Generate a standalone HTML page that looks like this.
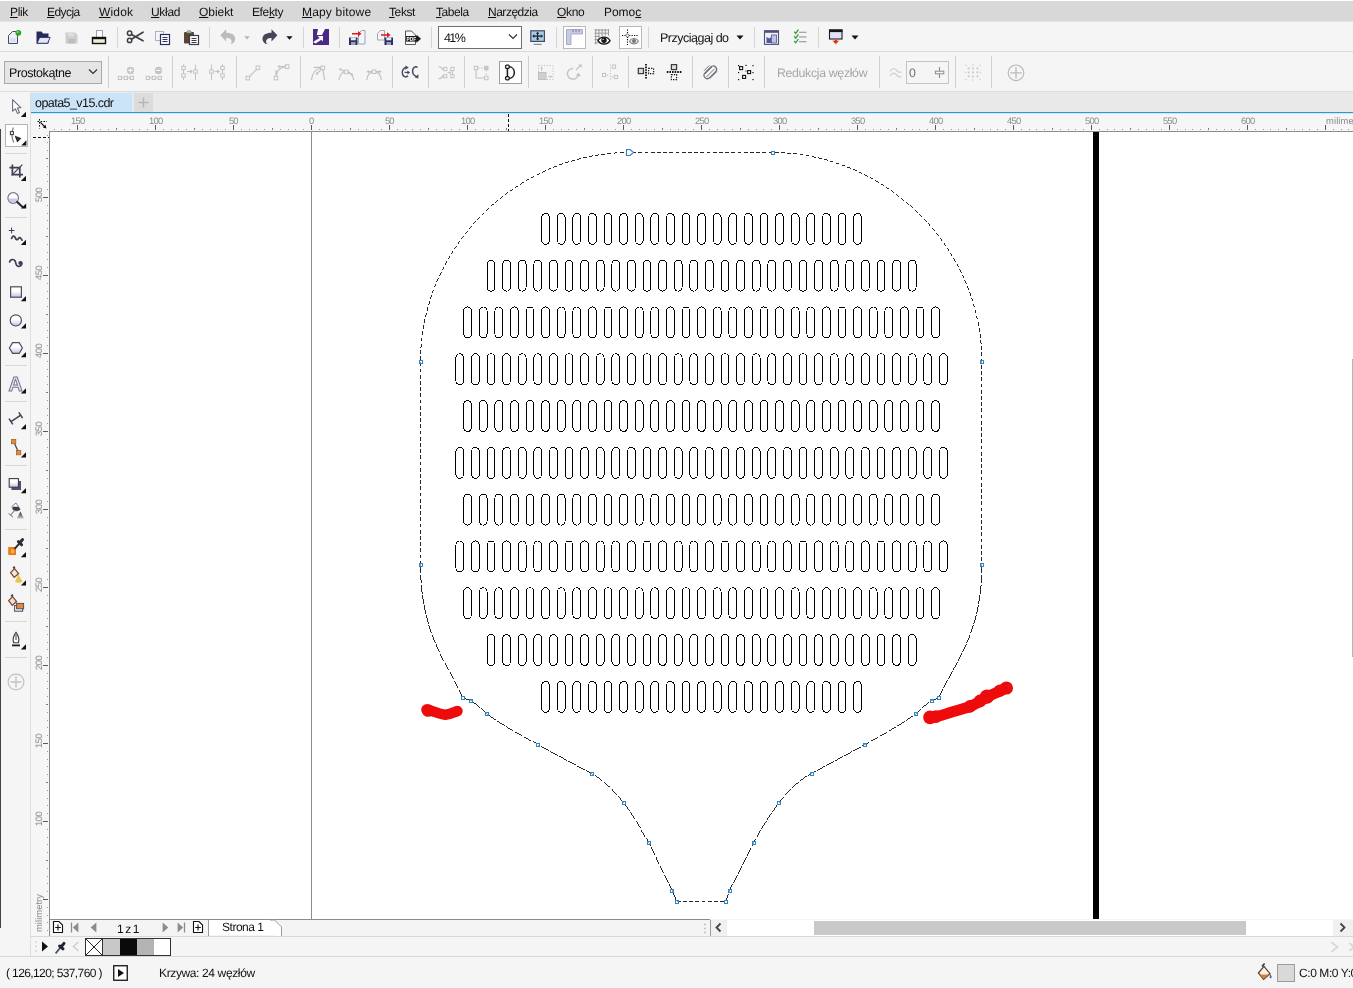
<!DOCTYPE html>
<html lang="pl"><head><meta charset="utf-8"><title>opata5_v15.cdr</title>
<style>
html,body{margin:0;padding:0;}
body{width:1353px;height:988px;position:relative;overflow:hidden;background:#f5f5f5;
 font-family:"Liberation Sans","DejaVu Sans",sans-serif;}
.t{position:absolute;white-space:pre;will-change:transform;text-rendering:geometricPrecision;}
.r{position:absolute;}
svg{position:absolute;overflow:visible;}
u{text-decoration:underline;text-underline-offset:1px;text-decoration-thickness:1px;}
</style></head><body>
<div class="r" style="left:0px;top:0px;width:1353px;height:1px;background:#ffffff;"></div>
<div class="r" style="left:0px;top:1px;width:1353px;height:20px;background:#d8d8d8;"></div>
<div class="r" style="left:0px;top:21px;width:1353px;height:1px;background:#e4e4e4;"></div>
<div class="r" style="left:0px;top:22px;width:1353px;height:29px;background:#f5f5f5;"></div>
<div class="r" style="left:0px;top:51px;width:1353px;height:1px;background:#dadada;"></div>
<div class="r" style="left:0px;top:52px;width:1353px;height:40px;background:#f5f5f5;"></div>
<div class="r" style="left:0px;top:91px;width:1353px;height:1px;background:#dddddd;"></div>
<div class="r" style="left:0px;top:92px;width:1353px;height:20px;background:#e9e9e9;"></div>
<div class="r" style="left:0px;top:92px;width:31px;height:844px;background:#f5f5f5;"></div>
<div class="r" style="left:31px;top:93px;width:101px;height:19px;background:#cce4f7;"></div>
<div class="r" style="left:134px;top:93px;width:19px;height:19px;background:#dcdcdc;"></div>
<div class="r" style="left:31px;top:112px;width:1322px;height:1px;background:#3a94c6;"></div>
<div class="r" style="left:31px;top:113px;width:1322px;height:1px;background:#c3eafa;"></div>
<div class="r" style="left:31px;top:114px;width:1322px;height:17px;background:#f6f6f6;"></div>
<div class="r" style="left:31px;top:131px;width:1322px;height:1px;background:#8c8c8c;"></div>
<div class="r" style="left:31px;top:114px;width:18px;height:822px;background:#f6f6f6;"></div>
<div class="r" style="left:49px;top:131px;width:1px;height:805px;background:#8c8c8c;"></div>
<div class="r" style="left:50px;top:132px;width:1303px;height:787px;background:#ffffff;"></div>
<div class="r" style="left:49px;top:919px;width:661px;height:1px;background:#8c8c8c;"></div>
<div class="r" style="left:50px;top:920px;width:1303px;height:16px;background:#f4f4f4;"></div>
<div class="r" style="left:710px;top:920px;width:643px;height:16px;background:#ffffff;"></div>
<div class="r" style="left:31px;top:936px;width:1322px;height:1px;background:#d8d8d8;"></div>
<div class="r" style="left:0px;top:937px;width:1353px;height:19px;background:#f5f5f5;"></div>
<div class="r" style="left:0px;top:956px;width:1353px;height:1px;background:#d8d8d8;"></div>
<div class="r" style="left:0px;top:957px;width:1353px;height:31px;background:#f5f5f5;"></div>
<div class="r" style="left:30px;top:93px;width:1px;height:863px;background:#dedede;"></div>
<div class="r" style="left:0px;top:129px;width:1px;height:799px;background:#444444;"></div>
<div class="r" style="left:1352px;top:359px;width:1px;height:298px;background:#b4b4b4;"></div>
<span class="t" style="left:10.3px;top:4.64px;font-size:12px;line-height:15px;letter-spacing:-0.33px;color:#111;"><u>P</u>lik</span>
<span class="t" style="left:47.3px;top:4.64px;font-size:12px;line-height:15px;letter-spacing:-0.57px;color:#111;"><u>E</u>dycja</span>
<span class="t" style="left:99.3px;top:4.64px;font-size:12px;line-height:15px;letter-spacing:0.18px;color:#111;"><u>W</u>idok</span>
<span class="t" style="left:151.2px;top:4.64px;font-size:12px;line-height:15px;letter-spacing:-0.31px;color:#111;"><u>U</u>kład</span>
<span class="t" style="left:199.3px;top:4.64px;font-size:12px;line-height:15px;letter-spacing:-0.05px;color:#111;"><u>O</u>biekt</span>
<span class="t" style="left:252.0px;top:4.64px;font-size:12px;line-height:15px;letter-spacing:-0.38px;color:#111;">Efe<u>k</u>ty</span>
<span class="t" style="left:302.3px;top:4.64px;font-size:12px;line-height:15px;letter-spacing:0.17px;color:#111;"><u>M</u>apy bitowe</span>
<span class="t" style="left:389.0px;top:4.64px;font-size:12px;line-height:15px;letter-spacing:-0.40px;color:#111;"><u>T</u>ekst</span>
<span class="t" style="left:435.5px;top:4.64px;font-size:12px;line-height:15px;letter-spacing:-0.46px;color:#111;"><u>T</u>abela</span>
<span class="t" style="left:488.3px;top:4.64px;font-size:12px;line-height:15px;letter-spacing:-0.49px;color:#111;"><u>N</u>arzędzia</span>
<span class="t" style="left:557.4px;top:4.64px;font-size:12px;line-height:15px;letter-spacing:-0.34px;color:#111;"><u>O</u>kno</span>
<span class="t" style="left:604.4px;top:4.64px;font-size:12px;line-height:15px;letter-spacing:-0.04px;color:#111;">Pomo<u>c</u></span>
<div class="r" style="left:117.0px;top:27px;width:1px;height:21px;background:#d4d4d4;"></div>
<div class="r" style="left:209.0px;top:27px;width:1px;height:21px;background:#d4d4d4;"></div>
<div class="r" style="left:303.0px;top:27px;width:1px;height:21px;background:#d4d4d4;"></div>
<div class="r" style="left:339.0px;top:27px;width:1px;height:21px;background:#d4d4d4;"></div>
<div class="r" style="left:431.0px;top:27px;width:1px;height:21px;background:#d4d4d4;"></div>
<div class="r" style="left:556.0px;top:27px;width:1px;height:21px;background:#d4d4d4;"></div>
<div class="r" style="left:648.0px;top:27px;width:1px;height:21px;background:#d4d4d4;"></div>
<div class="r" style="left:754.0px;top:27px;width:1px;height:21px;background:#d4d4d4;"></div>
<div class="r" style="left:818.0px;top:27px;width:1px;height:21px;background:#d4d4d4;"></div>
<div class="r" style="left:438px;top:26px;width:84px;height:22.5px;background:#ffffff;box-sizing:border-box;border:1px solid #6e6e6e;"></div>
<span class="t" style="left:444.3px;top:30.27px;font-size:12.5px;line-height:16px;letter-spacing:-1.60px;color:#111;">41%</span>
<svg style="left:508px;top:33px" width="10" height="8" viewBox="0 0 10 8"><path d="M1 1.5 L5 5.5 L9 1.5" fill="none" stroke="#333" stroke-width="1.2"/></svg>
<span class="t" style="left:659.7px;top:30.27px;font-size:12.5px;line-height:16px;letter-spacing:-0.50px;color:#111;">Przyciągaj do</span>
<svg style="left:736px;top:35px" width="8" height="5" viewBox="0 0 8 5"><path d="M0.5 0.5 L7.5 0.5 L4 4.5Z" fill="#111"/></svg>
<svg style="left:851px;top:35px" width="8" height="5" viewBox="0 0 8 5"><path d="M0.5 0.5 L7.5 0.5 L4 4.5Z" fill="#111"/></svg>
<svg style="left:286px;top:35.6px" width="7" height="4" viewBox="0 0 7 4"><path d="M0.4 0.3 L6.6 0.3 L3.5 3.8Z" fill="#111"/></svg>
<svg style="left:243.6px;top:35.8px" width="6" height="4" viewBox="0 0 6 4"><path d="M0.3 0.3 L5.7 0.3 L3 3.6Z" fill="#b4b4b4"/></svg>
<div class="r" style="left:563px;top:26px;width:23px;height:22.5px;background:#ffffff;box-sizing:border-box;border:1px solid #b9b9b9;"></div>
<div class="r" style="left:619px;top:26px;width:23px;height:22.5px;background:#ffffff;box-sizing:border-box;border:1px solid #b9b9b9;"></div>
<div class="r" style="left:108.0px;top:56px;width:1px;height:32px;background:#d2d2d2;"></div>
<div class="r" style="left:172.0px;top:56px;width:1px;height:32px;background:#d2d2d2;"></div>
<div class="r" style="left:236.0px;top:56px;width:1px;height:32px;background:#d2d2d2;"></div>
<div class="r" style="left:300.0px;top:56px;width:1px;height:32px;background:#d2d2d2;"></div>
<div class="r" style="left:392.0px;top:56px;width:1px;height:32px;background:#d2d2d2;"></div>
<div class="r" style="left:428.0px;top:56px;width:1px;height:32px;background:#d2d2d2;"></div>
<div class="r" style="left:464.0px;top:56px;width:1px;height:32px;background:#d2d2d2;"></div>
<div class="r" style="left:528.0px;top:56px;width:1px;height:32px;background:#d2d2d2;"></div>
<div class="r" style="left:592.0px;top:56px;width:1px;height:32px;background:#d2d2d2;"></div>
<div class="r" style="left:628.0px;top:56px;width:1px;height:32px;background:#d2d2d2;"></div>
<div class="r" style="left:692.0px;top:56px;width:1px;height:32px;background:#d2d2d2;"></div>
<div class="r" style="left:728.0px;top:56px;width:1px;height:32px;background:#d2d2d2;"></div>
<div class="r" style="left:764.0px;top:56px;width:1px;height:32px;background:#d2d2d2;"></div>
<div class="r" style="left:879.0px;top:56px;width:1px;height:32px;background:#d2d2d2;"></div>
<div class="r" style="left:955.0px;top:56px;width:1px;height:32px;background:#d2d2d2;"></div>
<div class="r" style="left:991.0px;top:56px;width:1px;height:32px;background:#d2d2d2;"></div>
<div class="r" style="left:4px;top:61px;width:98px;height:22.5px;background:#e5e5e5;box-sizing:border-box;border:1px solid #a9a9a9;"></div>
<span class="t" style="left:8.5px;top:64.87px;font-size:12.5px;line-height:16px;letter-spacing:-0.42px;color:#111;">Prostokątne</span>
<svg style="left:88px;top:68px" width="10" height="8" viewBox="0 0 10 8"><path d="M1 1.5 L5 5.5 L9 1.5" fill="none" stroke="#333" stroke-width="1.2"/></svg>
<div class="r" style="left:499px;top:61px;width:23px;height:22.5px;background:#ffffff;box-sizing:border-box;border:1px solid #a0a0a0;"></div>
<span class="t" style="left:777.0px;top:65.74px;font-size:12.3px;line-height:15px;letter-spacing:-0.32px;color:#a6a6a6;">Redukcja węzłów</span>
<div class="r" style="left:905.5px;top:61px;width:43px;height:22.5px;background:#f5f5f5;box-sizing:border-box;border:1px solid #c4c4c4;"></div>
<span class="t" style="left:909.2px;top:65.64px;font-size:12.3px;line-height:15px;letter-spacing:0.00px;color:#707070;">0</span>
<span class="t" style="left:34.5px;top:94.87px;font-size:12.5px;line-height:16px;letter-spacing:-0.55px;color:#111;">opata5_v15.cdr</span>
<svg style="left:137px;top:96px" width="13" height="13" viewBox="0 0 13 13"><path d="M6.5 1.5V11.5M1.5 6.5H11.5" stroke="#b5b5b5" stroke-width="1.4" fill="none"/></svg>
<svg style="left:0;top:0" width="1353" height="988" viewBox="0 0 1353 988" shape-rendering="crispEdges"><path d="M77.5 125V130M155.5 125V130M233.5 125V130M311.5 125V130M389.5 125V130M467.5 125V130M545.5 125V130M623.5 125V130M701.5 125V130M779.5 125V130M857.5 125V130M935.5 125V130M1013.5 125V130M1091.5 125V130M1169.5 125V130M1247.5 125V130M1325.5 125V130" stroke="#5a5a5a" stroke-width="1"/><path d="M116.5 128V130M194.5 128V130M272.5 128V130M350.5 128V130M428.5 128V130M506.5 128V130M584.5 128V130M662.5 128V130M740.5 128V130M818.5 128V130M896.5 128V130M974.5 128V130M1052.5 128V130M1130.5 128V130M1208.5 128V130M1286.5 128V130" stroke="#7a7a7a" stroke-width="1"/><path d="M54.5 129V130M61.5 129V130M69.5 129V130M85.5 129V130M93.5 129V130M100.5 129V130M108.5 129V130M124.5 129V130M132.5 129V130M139.5 129V130M147.5 129V130M163.5 129V130M171.5 129V130M178.5 129V130M186.5 129V130M202.5 129V130M210.5 129V130M217.5 129V130M225.5 129V130M241.5 129V130M249.5 129V130M256.5 129V130M264.5 129V130M280.5 129V130M288.5 129V130M295.5 129V130M303.5 129V130M319.5 129V130M327.5 129V130M334.5 129V130M342.5 129V130M358.5 129V130M366.5 129V130M373.5 129V130M381.5 129V130M397.5 129V130M405.5 129V130M412.5 129V130M420.5 129V130M436.5 129V130M444.5 129V130M451.5 129V130M459.5 129V130M475.5 129V130M483.5 129V130M490.5 129V130M498.5 129V130M514.5 129V130M522.5 129V130M529.5 129V130M537.5 129V130M553.5 129V130M561.5 129V130M568.5 129V130M576.5 129V130M592.5 129V130M600.5 129V130M607.5 129V130M615.5 129V130M631.5 129V130M639.5 129V130M646.5 129V130M654.5 129V130M670.5 129V130M678.5 129V130M685.5 129V130M693.5 129V130M709.5 129V130M717.5 129V130M724.5 129V130M732.5 129V130M748.5 129V130M756.5 129V130M763.5 129V130M771.5 129V130M787.5 129V130M795.5 129V130M802.5 129V130M810.5 129V130M826.5 129V130M834.5 129V130M841.5 129V130M849.5 129V130M865.5 129V130M873.5 129V130M880.5 129V130M888.5 129V130M904.5 129V130M912.5 129V130M919.5 129V130M927.5 129V130M943.5 129V130M951.5 129V130M958.5 129V130M966.5 129V130M982.5 129V130M990.5 129V130M997.5 129V130M1005.5 129V130M1021.5 129V130M1029.5 129V130M1036.5 129V130M1044.5 129V130M1060.5 129V130M1068.5 129V130M1075.5 129V130M1083.5 129V130M1099.5 129V130M1107.5 129V130M1114.5 129V130M1122.5 129V130M1138.5 129V130M1146.5 129V130M1153.5 129V130M1161.5 129V130M1177.5 129V130M1185.5 129V130M1192.5 129V130M1200.5 129V130M1216.5 129V130M1224.5 129V130M1231.5 129V130M1239.5 129V130M1255.5 129V130M1263.5 129V130M1270.5 129V130M1278.5 129V130M1294.5 129V130M1302.5 129V130M1309.5 129V130M1317.5 129V130M1333.5 129V130M1341.5 129V130M1348.5 129V130" stroke="#9a9a9a" stroke-width="1"/><path d="M43 197.5H48M43 275.5H48M43 353.5H48M43 431.5H48M43 509.5H48M43 587.5H48M43 665.5H48M43 743.5H48M43 821.5H48M43 899.5H48" stroke="#5a5a5a" stroke-width="1"/><path d="M46 158.5H48M46 236.5H48M46 314.5H48M46 392.5H48M46 470.5H48M46 548.5H48M46 626.5H48M46 704.5H48M46 782.5H48M46 860.5H48" stroke="#7a7a7a" stroke-width="1"/><path d="M47 135.5H48M47 142.5H48M47 150.5H48M47 166.5H48M47 174.5H48M47 181.5H48M47 189.5H48M47 205.5H48M47 213.5H48M47 220.5H48M47 228.5H48M47 244.5H48M47 252.5H48M47 259.5H48M47 267.5H48M47 283.5H48M47 291.5H48M47 298.5H48M47 306.5H48M47 322.5H48M47 330.5H48M47 337.5H48M47 345.5H48M47 361.5H48M47 369.5H48M47 376.5H48M47 384.5H48M47 400.5H48M47 408.5H48M47 415.5H48M47 423.5H48M47 439.5H48M47 447.5H48M47 454.5H48M47 462.5H48M47 478.5H48M47 486.5H48M47 493.5H48M47 501.5H48M47 517.5H48M47 525.5H48M47 532.5H48M47 540.5H48M47 556.5H48M47 564.5H48M47 571.5H48M47 579.5H48M47 595.5H48M47 603.5H48M47 610.5H48M47 618.5H48M47 634.5H48M47 642.5H48M47 649.5H48M47 657.5H48M47 673.5H48M47 681.5H48M47 688.5H48M47 696.5H48M47 712.5H48M47 720.5H48M47 727.5H48M47 735.5H48M47 751.5H48M47 759.5H48M47 766.5H48M47 774.5H48M47 790.5H48M47 798.5H48M47 805.5H48M47 813.5H48M47 829.5H48M47 837.5H48M47 844.5H48M47 852.5H48M47 868.5H48M47 876.5H48M47 883.5H48M47 891.5H48M47 907.5H48M47 915.5H48M47 922.5H48M47 930.5H48" stroke="#9a9a9a" stroke-width="1"/><path d="M508.5 114V131" stroke="#111" stroke-width="1" stroke-dasharray="3 2"/><path d="M33 137.5H49" stroke="#111" stroke-width="1" stroke-dasharray="3 2"/></svg>
<span class="t" style="left:70.6px;top:115.34px;font-size:9.4px;line-height:12px;letter-spacing:-0.66px;color:#8a8a8a;">150</span>
<span class="t" style="left:148.7px;top:115.34px;font-size:9.4px;line-height:12px;letter-spacing:-0.66px;color:#8a8a8a;">100</span>
<span class="t" style="left:229.1px;top:115.34px;font-size:9.4px;line-height:12px;letter-spacing:-0.97px;color:#8a8a8a;">50</span>
<span class="t" style="left:309.4px;top:115.34px;font-size:9.4px;line-height:12px;letter-spacing:0.00px;color:#8a8a8a;">0</span>
<span class="t" style="left:385.1px;top:115.34px;font-size:9.4px;line-height:12px;letter-spacing:-0.97px;color:#8a8a8a;">50</span>
<span class="t" style="left:460.7px;top:115.34px;font-size:9.4px;line-height:12px;letter-spacing:-0.66px;color:#8a8a8a;">100</span>
<span class="t" style="left:538.6px;top:115.34px;font-size:9.4px;line-height:12px;letter-spacing:-0.66px;color:#8a8a8a;">150</span>
<span class="t" style="left:616.6px;top:115.34px;font-size:9.4px;line-height:12px;letter-spacing:-0.66px;color:#8a8a8a;">200</span>
<span class="t" style="left:694.6px;top:115.34px;font-size:9.4px;line-height:12px;letter-spacing:-0.66px;color:#8a8a8a;">250</span>
<span class="t" style="left:772.6px;top:115.34px;font-size:9.4px;line-height:12px;letter-spacing:-0.66px;color:#8a8a8a;">300</span>
<span class="t" style="left:850.6px;top:115.34px;font-size:9.4px;line-height:12px;letter-spacing:-0.66px;color:#8a8a8a;">350</span>
<span class="t" style="left:928.6px;top:115.34px;font-size:9.4px;line-height:12px;letter-spacing:-0.66px;color:#8a8a8a;">400</span>
<span class="t" style="left:1006.6px;top:115.34px;font-size:9.4px;line-height:12px;letter-spacing:-0.66px;color:#8a8a8a;">450</span>
<span class="t" style="left:1084.6px;top:115.34px;font-size:9.4px;line-height:12px;letter-spacing:-0.66px;color:#8a8a8a;">500</span>
<span class="t" style="left:1162.6px;top:115.34px;font-size:9.4px;line-height:12px;letter-spacing:-0.66px;color:#8a8a8a;">550</span>
<span class="t" style="left:1240.6px;top:115.34px;font-size:9.4px;line-height:12px;letter-spacing:-0.66px;color:#8a8a8a;">600</span>
<span class="t" style="left:1325.5px;top:115.34px;font-size:9.4px;line-height:12px;letter-spacing:0.12px;color:#8a8a8a;">milimetry</span>
<span class="t" style="left:38.6px;top:195.4px;font-size:9.4px;line-height:10px;width:0;height:0;color:#8a8a8a;"><span style="position:absolute;left:0;top:0;transform:rotate(-90deg) translate(-50%,-50%);transform-origin:0 0;letter-spacing:-0.45px;white-space:pre;display:block;">500</span></span>
<span class="t" style="left:38.6px;top:273.4px;font-size:9.4px;line-height:10px;width:0;height:0;color:#8a8a8a;"><span style="position:absolute;left:0;top:0;transform:rotate(-90deg) translate(-50%,-50%);transform-origin:0 0;letter-spacing:-0.45px;white-space:pre;display:block;">450</span></span>
<span class="t" style="left:38.6px;top:351.4px;font-size:9.4px;line-height:10px;width:0;height:0;color:#8a8a8a;"><span style="position:absolute;left:0;top:0;transform:rotate(-90deg) translate(-50%,-50%);transform-origin:0 0;letter-spacing:-0.45px;white-space:pre;display:block;">400</span></span>
<span class="t" style="left:38.6px;top:429.4px;font-size:9.4px;line-height:10px;width:0;height:0;color:#8a8a8a;"><span style="position:absolute;left:0;top:0;transform:rotate(-90deg) translate(-50%,-50%);transform-origin:0 0;letter-spacing:-0.45px;white-space:pre;display:block;">350</span></span>
<span class="t" style="left:38.6px;top:507.4px;font-size:9.4px;line-height:10px;width:0;height:0;color:#8a8a8a;"><span style="position:absolute;left:0;top:0;transform:rotate(-90deg) translate(-50%,-50%);transform-origin:0 0;letter-spacing:-0.45px;white-space:pre;display:block;">300</span></span>
<span class="t" style="left:38.6px;top:585.4px;font-size:9.4px;line-height:10px;width:0;height:0;color:#8a8a8a;"><span style="position:absolute;left:0;top:0;transform:rotate(-90deg) translate(-50%,-50%);transform-origin:0 0;letter-spacing:-0.45px;white-space:pre;display:block;">250</span></span>
<span class="t" style="left:38.6px;top:663.4px;font-size:9.4px;line-height:10px;width:0;height:0;color:#8a8a8a;"><span style="position:absolute;left:0;top:0;transform:rotate(-90deg) translate(-50%,-50%);transform-origin:0 0;letter-spacing:-0.45px;white-space:pre;display:block;">200</span></span>
<span class="t" style="left:38.6px;top:741.4px;font-size:9.4px;line-height:10px;width:0;height:0;color:#8a8a8a;"><span style="position:absolute;left:0;top:0;transform:rotate(-90deg) translate(-50%,-50%);transform-origin:0 0;letter-spacing:-0.45px;white-space:pre;display:block;">150</span></span>
<span class="t" style="left:38.6px;top:819.4px;font-size:9.4px;line-height:10px;width:0;height:0;color:#8a8a8a;"><span style="position:absolute;left:0;top:0;transform:rotate(-90deg) translate(-50%,-50%);transform-origin:0 0;letter-spacing:-0.45px;white-space:pre;display:block;">100</span></span>
<span class="t" style="left:38.6px;top:912.8px;font-size:9.4px;line-height:10px;width:0;height:0;color:#8a8a8a;"><span style="position:absolute;left:0;top:0;transform:rotate(-90deg) translate(-50%,-50%);transform-origin:0 0;letter-spacing:0.06px;white-space:pre;display:block;">milimetry</span></span>
<span class="t" style="left:116.6px;top:921.54px;font-size:12px;line-height:15px;letter-spacing:-0.90px;color:#111;">1 z 1</span>
<div class="r" style="left:207.5px;top:920px;width:1px;height:16px;background:#9a9a9a;"></div>
<div class="r" style="left:208.5px;top:920px;width:66px;height:15px;background:#ffffff;"></div>
<svg style="left:270px;top:919px" width="16" height="18" viewBox="0 0 16 18"><path d="M0 1H4.5L11.5 8V17H4.5V1Z" fill="#fff" stroke="none"/><path d="M0 1H4.5L11.5 8V17" fill="none" stroke="#9a9a9a" stroke-width="1"/></svg>
<span class="t" style="left:222.3px;top:919.94px;font-size:12px;line-height:15px;letter-spacing:-0.48px;color:#111;">Strona 1</span>
<div class="r" style="left:701px;top:920px;width:9px;height:16px;background:#f4f4f4;"></div>
<div class="r" style="left:709.5px;top:920px;width:1px;height:16px;background:#9a9a9a;"></div>
<svg style="left:703px;top:923px" width="4" height="11" viewBox="0 0 4 11"><circle cx="2" cy="1.5" r="0.9" fill="#bbb"/><circle cx="2" cy="5.5" r="0.9" fill="#bbb"/><circle cx="2" cy="9.5" r="0.9" fill="#bbb"/></svg>
<div class="r" style="left:711px;top:920px;width:16px;height:16px;background:#f0f0f0;"></div>
<svg style="left:714px;top:922px" width="9" height="11" viewBox="0 0 9 11"><path d="M6.5 1.5L2.5 5.5L6.5 9.5" fill="none" stroke="#444" stroke-width="1.8"/></svg>
<div class="r" style="left:814px;top:921px;width:432px;height:14px;background:#c9c9c9;"></div>
<div class="r" style="left:1333px;top:920px;width:20px;height:16px;background:#f0f0f0;"></div>
<svg style="left:1338px;top:922px" width="9" height="11" viewBox="0 0 9 11"><path d="M2.5 1.5L6.5 5.5L2.5 9.5" fill="none" stroke="#444" stroke-width="1.8"/></svg>
<svg style="left:34px;top:940px" width="4" height="14" viewBox="0 0 4 14"><circle cx="2" cy="2" r="0.8" fill="#c4c4c4"/><circle cx="2" cy="6.5" r="0.8" fill="#c4c4c4"/><circle cx="2" cy="11" r="0.8" fill="#c4c4c4"/></svg>
<svg style="left:41px;top:941px" width="8" height="11" viewBox="0 0 8 11"><path d="M1 0.5L7 5.5L1 10.5Z" fill="#111"/></svg>
<svg style="left:72px;top:941px" width="8" height="11" viewBox="0 0 8 11"><path d="M6.5 1L1.5 5.5L6.5 10" fill="none" stroke="#cfcfcf" stroke-width="1.6"/></svg>
<div class="r" style="left:85.5px;top:938.5px;width:17px;height:16.5px;background:#ffffff;"></div>
<div class="r" style="left:102.5px;top:938.5px;width:17px;height:16.5px;background:#c8c8c8;"></div>
<div class="r" style="left:119.5px;top:938.5px;width:17px;height:16.5px;background:#0a0a0a;"></div>
<div class="r" style="left:136.5px;top:938.5px;width:17px;height:16.5px;background:#b4b4b4;"></div>
<div class="r" style="left:153.5px;top:938.5px;width:17px;height:16.5px;background:#ffffff;"></div>
<svg style="left:85px;top:938px" width="87" height="18" viewBox="0 0 87 18" shape-rendering="crispEdges"><rect x="0.5" y="0.5" width="85" height="16.5" fill="none" stroke="#333"/><path d="M17.5 0.5V17" stroke="#333" fill="none"/></svg>
<svg style="left:85px;top:938px" width="18" height="18" viewBox="0 0 18 18"><path d="M1 1L17 17M17 1L1 17" stroke="#222" stroke-width="1" fill="none"/></svg>
<svg style="left:1329px;top:940.5px" width="12" height="12" viewBox="0 0 12 12"><path d="M2.5 1.2L8.5 6L2.5 10.8" fill="none" stroke="#d9d9d9" stroke-width="2"/></svg>
<svg style="left:1348px;top:940.5px" width="5" height="12" viewBox="0 0 5 12"><path d="M1.5 2L6 6L1.5 10" fill="none" stroke="#d9d9d9" stroke-width="1.8"/></svg>
<span class="t" style="left:6.2px;top:966.24px;font-size:12px;line-height:15px;letter-spacing:-0.61px;color:#111;">( 126,120; 537,760 )</span>
<svg style="left:113px;top:965px" width="16" height="17" viewBox="0 0 16 17"><rect x="0.75" y="0.75" width="13.5" height="14.5" fill="#fff" stroke="#111" stroke-width="1.3"/><path d="M5 4L11 8L5 12Z" fill="#111"/></svg>
<span class="t" style="left:159.3px;top:966.24px;font-size:12px;line-height:15px;letter-spacing:-0.37px;color:#111;">Krzywa: 24 węzłów</span>
<div class="r" style="left:1277px;top:964px;width:17.5px;height:17.5px;background:#d9d9d9;box-sizing:border-box;border:1px solid #9c9c9c;"></div>
<span class="t" style="left:1298.5px;top:966.24px;font-size:12px;line-height:15px;letter-spacing:-0.42px;color:#111;">C:0 M:0 Y:0 K:0</span>
<svg style="left:0;top:0" width="1353" height="988" viewBox="0 0 1353 988"><rect x="311" y="132" width="1" height="787" fill="#8c8c8c" shape-rendering="crispEdges"/><rect x="1093" y="132" width="6" height="787" fill="#000" shape-rendering="crispEdges"/><g fill="none" stroke="#000" stroke-width="1" shape-rendering="crispEdges"><rect x="541.65" y="213.35" width="7.9" height="31.0" rx="3.95" ry="4.6"/><rect x="557.25" y="213.35" width="7.9" height="31.0" rx="3.95" ry="4.6"/><rect x="572.85" y="213.35" width="7.9" height="31.0" rx="3.95" ry="4.6"/><rect x="588.45" y="213.35" width="7.9" height="31.0" rx="3.95" ry="4.6"/><rect x="604.05" y="213.35" width="7.9" height="31.0" rx="3.95" ry="4.6"/><rect x="619.65" y="213.35" width="7.9" height="31.0" rx="3.95" ry="4.6"/><rect x="635.25" y="213.35" width="7.9" height="31.0" rx="3.95" ry="4.6"/><rect x="650.85" y="213.35" width="7.9" height="31.0" rx="3.95" ry="4.6"/><rect x="666.45" y="213.35" width="7.9" height="31.0" rx="3.95" ry="4.6"/><rect x="682.05" y="213.35" width="7.9" height="31.0" rx="3.95" ry="4.6"/><rect x="697.65" y="213.35" width="7.9" height="31.0" rx="3.95" ry="4.6"/><rect x="713.25" y="213.35" width="7.9" height="31.0" rx="3.95" ry="4.6"/><rect x="728.85" y="213.35" width="7.9" height="31.0" rx="3.95" ry="4.6"/><rect x="744.45" y="213.35" width="7.9" height="31.0" rx="3.95" ry="4.6"/><rect x="760.05" y="213.35" width="7.9" height="31.0" rx="3.95" ry="4.6"/><rect x="775.65" y="213.35" width="7.9" height="31.0" rx="3.95" ry="4.6"/><rect x="791.25" y="213.35" width="7.9" height="31.0" rx="3.95" ry="4.6"/><rect x="806.85" y="213.35" width="7.9" height="31.0" rx="3.95" ry="4.6"/><rect x="822.45" y="213.35" width="7.9" height="31.0" rx="3.95" ry="4.6"/><rect x="838.05" y="213.35" width="7.9" height="31.0" rx="3.95" ry="4.6"/><rect x="853.65" y="213.35" width="7.9" height="31.0" rx="3.95" ry="4.6"/><rect x="487.05" y="260.15" width="7.9" height="31.0" rx="3.95" ry="4.6"/><rect x="502.65" y="260.15" width="7.9" height="31.0" rx="3.95" ry="4.6"/><rect x="518.25" y="260.15" width="7.9" height="31.0" rx="3.95" ry="4.6"/><rect x="533.85" y="260.15" width="7.9" height="31.0" rx="3.95" ry="4.6"/><rect x="549.45" y="260.15" width="7.9" height="31.0" rx="3.95" ry="4.6"/><rect x="565.05" y="260.15" width="7.9" height="31.0" rx="3.95" ry="4.6"/><rect x="580.65" y="260.15" width="7.9" height="31.0" rx="3.95" ry="4.6"/><rect x="596.25" y="260.15" width="7.9" height="31.0" rx="3.95" ry="4.6"/><rect x="611.85" y="260.15" width="7.9" height="31.0" rx="3.95" ry="4.6"/><rect x="627.45" y="260.15" width="7.9" height="31.0" rx="3.95" ry="4.6"/><rect x="643.05" y="260.15" width="7.9" height="31.0" rx="3.95" ry="4.6"/><rect x="658.65" y="260.15" width="7.9" height="31.0" rx="3.95" ry="4.6"/><rect x="674.25" y="260.15" width="7.9" height="31.0" rx="3.95" ry="4.6"/><rect x="689.85" y="260.15" width="7.9" height="31.0" rx="3.95" ry="4.6"/><rect x="705.45" y="260.15" width="7.9" height="31.0" rx="3.95" ry="4.6"/><rect x="721.05" y="260.15" width="7.9" height="31.0" rx="3.95" ry="4.6"/><rect x="736.65" y="260.15" width="7.9" height="31.0" rx="3.95" ry="4.6"/><rect x="752.25" y="260.15" width="7.9" height="31.0" rx="3.95" ry="4.6"/><rect x="767.85" y="260.15" width="7.9" height="31.0" rx="3.95" ry="4.6"/><rect x="783.45" y="260.15" width="7.9" height="31.0" rx="3.95" ry="4.6"/><rect x="799.05" y="260.15" width="7.9" height="31.0" rx="3.95" ry="4.6"/><rect x="814.65" y="260.15" width="7.9" height="31.0" rx="3.95" ry="4.6"/><rect x="830.25" y="260.15" width="7.9" height="31.0" rx="3.95" ry="4.6"/><rect x="845.85" y="260.15" width="7.9" height="31.0" rx="3.95" ry="4.6"/><rect x="861.45" y="260.15" width="7.9" height="31.0" rx="3.95" ry="4.6"/><rect x="877.05" y="260.15" width="7.9" height="31.0" rx="3.95" ry="4.6"/><rect x="892.65" y="260.15" width="7.9" height="31.0" rx="3.95" ry="4.6"/><rect x="908.25" y="260.15" width="7.9" height="31.0" rx="3.95" ry="4.6"/><rect x="463.65" y="306.95" width="7.9" height="31.0" rx="3.95" ry="4.6"/><rect x="479.25" y="306.95" width="7.9" height="31.0" rx="3.95" ry="4.6"/><rect x="494.85" y="306.95" width="7.9" height="31.0" rx="3.95" ry="4.6"/><rect x="510.45" y="306.95" width="7.9" height="31.0" rx="3.95" ry="4.6"/><rect x="526.05" y="306.95" width="7.9" height="31.0" rx="3.95" ry="4.6"/><rect x="541.65" y="306.95" width="7.9" height="31.0" rx="3.95" ry="4.6"/><rect x="557.25" y="306.95" width="7.9" height="31.0" rx="3.95" ry="4.6"/><rect x="572.85" y="306.95" width="7.9" height="31.0" rx="3.95" ry="4.6"/><rect x="588.45" y="306.95" width="7.9" height="31.0" rx="3.95" ry="4.6"/><rect x="604.05" y="306.95" width="7.9" height="31.0" rx="3.95" ry="4.6"/><rect x="619.65" y="306.95" width="7.9" height="31.0" rx="3.95" ry="4.6"/><rect x="635.25" y="306.95" width="7.9" height="31.0" rx="3.95" ry="4.6"/><rect x="650.85" y="306.95" width="7.9" height="31.0" rx="3.95" ry="4.6"/><rect x="666.45" y="306.95" width="7.9" height="31.0" rx="3.95" ry="4.6"/><rect x="682.05" y="306.95" width="7.9" height="31.0" rx="3.95" ry="4.6"/><rect x="697.65" y="306.95" width="7.9" height="31.0" rx="3.95" ry="4.6"/><rect x="713.25" y="306.95" width="7.9" height="31.0" rx="3.95" ry="4.6"/><rect x="728.85" y="306.95" width="7.9" height="31.0" rx="3.95" ry="4.6"/><rect x="744.45" y="306.95" width="7.9" height="31.0" rx="3.95" ry="4.6"/><rect x="760.05" y="306.95" width="7.9" height="31.0" rx="3.95" ry="4.6"/><rect x="775.65" y="306.95" width="7.9" height="31.0" rx="3.95" ry="4.6"/><rect x="791.25" y="306.95" width="7.9" height="31.0" rx="3.95" ry="4.6"/><rect x="806.85" y="306.95" width="7.9" height="31.0" rx="3.95" ry="4.6"/><rect x="822.45" y="306.95" width="7.9" height="31.0" rx="3.95" ry="4.6"/><rect x="838.05" y="306.95" width="7.9" height="31.0" rx="3.95" ry="4.6"/><rect x="853.65" y="306.95" width="7.9" height="31.0" rx="3.95" ry="4.6"/><rect x="869.25" y="306.95" width="7.9" height="31.0" rx="3.95" ry="4.6"/><rect x="884.85" y="306.95" width="7.9" height="31.0" rx="3.95" ry="4.6"/><rect x="900.45" y="306.95" width="7.9" height="31.0" rx="3.95" ry="4.6"/><rect x="916.05" y="306.95" width="7.9" height="31.0" rx="3.95" ry="4.6"/><rect x="931.65" y="306.95" width="7.9" height="31.0" rx="3.95" ry="4.6"/><rect x="455.85" y="353.75" width="7.9" height="31.0" rx="3.95" ry="4.6"/><rect x="471.45" y="353.75" width="7.9" height="31.0" rx="3.95" ry="4.6"/><rect x="487.05" y="353.75" width="7.9" height="31.0" rx="3.95" ry="4.6"/><rect x="502.65" y="353.75" width="7.9" height="31.0" rx="3.95" ry="4.6"/><rect x="518.25" y="353.75" width="7.9" height="31.0" rx="3.95" ry="4.6"/><rect x="533.85" y="353.75" width="7.9" height="31.0" rx="3.95" ry="4.6"/><rect x="549.45" y="353.75" width="7.9" height="31.0" rx="3.95" ry="4.6"/><rect x="565.05" y="353.75" width="7.9" height="31.0" rx="3.95" ry="4.6"/><rect x="580.65" y="353.75" width="7.9" height="31.0" rx="3.95" ry="4.6"/><rect x="596.25" y="353.75" width="7.9" height="31.0" rx="3.95" ry="4.6"/><rect x="611.85" y="353.75" width="7.9" height="31.0" rx="3.95" ry="4.6"/><rect x="627.45" y="353.75" width="7.9" height="31.0" rx="3.95" ry="4.6"/><rect x="643.05" y="353.75" width="7.9" height="31.0" rx="3.95" ry="4.6"/><rect x="658.65" y="353.75" width="7.9" height="31.0" rx="3.95" ry="4.6"/><rect x="674.25" y="353.75" width="7.9" height="31.0" rx="3.95" ry="4.6"/><rect x="689.85" y="353.75" width="7.9" height="31.0" rx="3.95" ry="4.6"/><rect x="705.45" y="353.75" width="7.9" height="31.0" rx="3.95" ry="4.6"/><rect x="721.05" y="353.75" width="7.9" height="31.0" rx="3.95" ry="4.6"/><rect x="736.65" y="353.75" width="7.9" height="31.0" rx="3.95" ry="4.6"/><rect x="752.25" y="353.75" width="7.9" height="31.0" rx="3.95" ry="4.6"/><rect x="767.85" y="353.75" width="7.9" height="31.0" rx="3.95" ry="4.6"/><rect x="783.45" y="353.75" width="7.9" height="31.0" rx="3.95" ry="4.6"/><rect x="799.05" y="353.75" width="7.9" height="31.0" rx="3.95" ry="4.6"/><rect x="814.65" y="353.75" width="7.9" height="31.0" rx="3.95" ry="4.6"/><rect x="830.25" y="353.75" width="7.9" height="31.0" rx="3.95" ry="4.6"/><rect x="845.85" y="353.75" width="7.9" height="31.0" rx="3.95" ry="4.6"/><rect x="861.45" y="353.75" width="7.9" height="31.0" rx="3.95" ry="4.6"/><rect x="877.05" y="353.75" width="7.9" height="31.0" rx="3.95" ry="4.6"/><rect x="892.65" y="353.75" width="7.9" height="31.0" rx="3.95" ry="4.6"/><rect x="908.25" y="353.75" width="7.9" height="31.0" rx="3.95" ry="4.6"/><rect x="923.85" y="353.75" width="7.9" height="31.0" rx="3.95" ry="4.6"/><rect x="939.45" y="353.75" width="7.9" height="31.0" rx="3.95" ry="4.6"/><rect x="463.65" y="400.55" width="7.9" height="31.0" rx="3.95" ry="4.6"/><rect x="479.25" y="400.55" width="7.9" height="31.0" rx="3.95" ry="4.6"/><rect x="494.85" y="400.55" width="7.9" height="31.0" rx="3.95" ry="4.6"/><rect x="510.45" y="400.55" width="7.9" height="31.0" rx="3.95" ry="4.6"/><rect x="526.05" y="400.55" width="7.9" height="31.0" rx="3.95" ry="4.6"/><rect x="541.65" y="400.55" width="7.9" height="31.0" rx="3.95" ry="4.6"/><rect x="557.25" y="400.55" width="7.9" height="31.0" rx="3.95" ry="4.6"/><rect x="572.85" y="400.55" width="7.9" height="31.0" rx="3.95" ry="4.6"/><rect x="588.45" y="400.55" width="7.9" height="31.0" rx="3.95" ry="4.6"/><rect x="604.05" y="400.55" width="7.9" height="31.0" rx="3.95" ry="4.6"/><rect x="619.65" y="400.55" width="7.9" height="31.0" rx="3.95" ry="4.6"/><rect x="635.25" y="400.55" width="7.9" height="31.0" rx="3.95" ry="4.6"/><rect x="650.85" y="400.55" width="7.9" height="31.0" rx="3.95" ry="4.6"/><rect x="666.45" y="400.55" width="7.9" height="31.0" rx="3.95" ry="4.6"/><rect x="682.05" y="400.55" width="7.9" height="31.0" rx="3.95" ry="4.6"/><rect x="697.65" y="400.55" width="7.9" height="31.0" rx="3.95" ry="4.6"/><rect x="713.25" y="400.55" width="7.9" height="31.0" rx="3.95" ry="4.6"/><rect x="728.85" y="400.55" width="7.9" height="31.0" rx="3.95" ry="4.6"/><rect x="744.45" y="400.55" width="7.9" height="31.0" rx="3.95" ry="4.6"/><rect x="760.05" y="400.55" width="7.9" height="31.0" rx="3.95" ry="4.6"/><rect x="775.65" y="400.55" width="7.9" height="31.0" rx="3.95" ry="4.6"/><rect x="791.25" y="400.55" width="7.9" height="31.0" rx="3.95" ry="4.6"/><rect x="806.85" y="400.55" width="7.9" height="31.0" rx="3.95" ry="4.6"/><rect x="822.45" y="400.55" width="7.9" height="31.0" rx="3.95" ry="4.6"/><rect x="838.05" y="400.55" width="7.9" height="31.0" rx="3.95" ry="4.6"/><rect x="853.65" y="400.55" width="7.9" height="31.0" rx="3.95" ry="4.6"/><rect x="869.25" y="400.55" width="7.9" height="31.0" rx="3.95" ry="4.6"/><rect x="884.85" y="400.55" width="7.9" height="31.0" rx="3.95" ry="4.6"/><rect x="900.45" y="400.55" width="7.9" height="31.0" rx="3.95" ry="4.6"/><rect x="916.05" y="400.55" width="7.9" height="31.0" rx="3.95" ry="4.6"/><rect x="931.65" y="400.55" width="7.9" height="31.0" rx="3.95" ry="4.6"/><rect x="455.85" y="447.35" width="7.9" height="31.0" rx="3.95" ry="4.6"/><rect x="471.45" y="447.35" width="7.9" height="31.0" rx="3.95" ry="4.6"/><rect x="487.05" y="447.35" width="7.9" height="31.0" rx="3.95" ry="4.6"/><rect x="502.65" y="447.35" width="7.9" height="31.0" rx="3.95" ry="4.6"/><rect x="518.25" y="447.35" width="7.9" height="31.0" rx="3.95" ry="4.6"/><rect x="533.85" y="447.35" width="7.9" height="31.0" rx="3.95" ry="4.6"/><rect x="549.45" y="447.35" width="7.9" height="31.0" rx="3.95" ry="4.6"/><rect x="565.05" y="447.35" width="7.9" height="31.0" rx="3.95" ry="4.6"/><rect x="580.65" y="447.35" width="7.9" height="31.0" rx="3.95" ry="4.6"/><rect x="596.25" y="447.35" width="7.9" height="31.0" rx="3.95" ry="4.6"/><rect x="611.85" y="447.35" width="7.9" height="31.0" rx="3.95" ry="4.6"/><rect x="627.45" y="447.35" width="7.9" height="31.0" rx="3.95" ry="4.6"/><rect x="643.05" y="447.35" width="7.9" height="31.0" rx="3.95" ry="4.6"/><rect x="658.65" y="447.35" width="7.9" height="31.0" rx="3.95" ry="4.6"/><rect x="674.25" y="447.35" width="7.9" height="31.0" rx="3.95" ry="4.6"/><rect x="689.85" y="447.35" width="7.9" height="31.0" rx="3.95" ry="4.6"/><rect x="705.45" y="447.35" width="7.9" height="31.0" rx="3.95" ry="4.6"/><rect x="721.05" y="447.35" width="7.9" height="31.0" rx="3.95" ry="4.6"/><rect x="736.65" y="447.35" width="7.9" height="31.0" rx="3.95" ry="4.6"/><rect x="752.25" y="447.35" width="7.9" height="31.0" rx="3.95" ry="4.6"/><rect x="767.85" y="447.35" width="7.9" height="31.0" rx="3.95" ry="4.6"/><rect x="783.45" y="447.35" width="7.9" height="31.0" rx="3.95" ry="4.6"/><rect x="799.05" y="447.35" width="7.9" height="31.0" rx="3.95" ry="4.6"/><rect x="814.65" y="447.35" width="7.9" height="31.0" rx="3.95" ry="4.6"/><rect x="830.25" y="447.35" width="7.9" height="31.0" rx="3.95" ry="4.6"/><rect x="845.85" y="447.35" width="7.9" height="31.0" rx="3.95" ry="4.6"/><rect x="861.45" y="447.35" width="7.9" height="31.0" rx="3.95" ry="4.6"/><rect x="877.05" y="447.35" width="7.9" height="31.0" rx="3.95" ry="4.6"/><rect x="892.65" y="447.35" width="7.9" height="31.0" rx="3.95" ry="4.6"/><rect x="908.25" y="447.35" width="7.9" height="31.0" rx="3.95" ry="4.6"/><rect x="923.85" y="447.35" width="7.9" height="31.0" rx="3.95" ry="4.6"/><rect x="939.45" y="447.35" width="7.9" height="31.0" rx="3.95" ry="4.6"/><rect x="463.65" y="494.15" width="7.9" height="31.0" rx="3.95" ry="4.6"/><rect x="479.25" y="494.15" width="7.9" height="31.0" rx="3.95" ry="4.6"/><rect x="494.85" y="494.15" width="7.9" height="31.0" rx="3.95" ry="4.6"/><rect x="510.45" y="494.15" width="7.9" height="31.0" rx="3.95" ry="4.6"/><rect x="526.05" y="494.15" width="7.9" height="31.0" rx="3.95" ry="4.6"/><rect x="541.65" y="494.15" width="7.9" height="31.0" rx="3.95" ry="4.6"/><rect x="557.25" y="494.15" width="7.9" height="31.0" rx="3.95" ry="4.6"/><rect x="572.85" y="494.15" width="7.9" height="31.0" rx="3.95" ry="4.6"/><rect x="588.45" y="494.15" width="7.9" height="31.0" rx="3.95" ry="4.6"/><rect x="604.05" y="494.15" width="7.9" height="31.0" rx="3.95" ry="4.6"/><rect x="619.65" y="494.15" width="7.9" height="31.0" rx="3.95" ry="4.6"/><rect x="635.25" y="494.15" width="7.9" height="31.0" rx="3.95" ry="4.6"/><rect x="650.85" y="494.15" width="7.9" height="31.0" rx="3.95" ry="4.6"/><rect x="666.45" y="494.15" width="7.9" height="31.0" rx="3.95" ry="4.6"/><rect x="682.05" y="494.15" width="7.9" height="31.0" rx="3.95" ry="4.6"/><rect x="697.65" y="494.15" width="7.9" height="31.0" rx="3.95" ry="4.6"/><rect x="713.25" y="494.15" width="7.9" height="31.0" rx="3.95" ry="4.6"/><rect x="728.85" y="494.15" width="7.9" height="31.0" rx="3.95" ry="4.6"/><rect x="744.45" y="494.15" width="7.9" height="31.0" rx="3.95" ry="4.6"/><rect x="760.05" y="494.15" width="7.9" height="31.0" rx="3.95" ry="4.6"/><rect x="775.65" y="494.15" width="7.9" height="31.0" rx="3.95" ry="4.6"/><rect x="791.25" y="494.15" width="7.9" height="31.0" rx="3.95" ry="4.6"/><rect x="806.85" y="494.15" width="7.9" height="31.0" rx="3.95" ry="4.6"/><rect x="822.45" y="494.15" width="7.9" height="31.0" rx="3.95" ry="4.6"/><rect x="838.05" y="494.15" width="7.9" height="31.0" rx="3.95" ry="4.6"/><rect x="853.65" y="494.15" width="7.9" height="31.0" rx="3.95" ry="4.6"/><rect x="869.25" y="494.15" width="7.9" height="31.0" rx="3.95" ry="4.6"/><rect x="884.85" y="494.15" width="7.9" height="31.0" rx="3.95" ry="4.6"/><rect x="900.45" y="494.15" width="7.9" height="31.0" rx="3.95" ry="4.6"/><rect x="916.05" y="494.15" width="7.9" height="31.0" rx="3.95" ry="4.6"/><rect x="931.65" y="494.15" width="7.9" height="31.0" rx="3.95" ry="4.6"/><rect x="455.85" y="540.95" width="7.9" height="31.0" rx="3.95" ry="4.6"/><rect x="471.45" y="540.95" width="7.9" height="31.0" rx="3.95" ry="4.6"/><rect x="487.05" y="540.95" width="7.9" height="31.0" rx="3.95" ry="4.6"/><rect x="502.65" y="540.95" width="7.9" height="31.0" rx="3.95" ry="4.6"/><rect x="518.25" y="540.95" width="7.9" height="31.0" rx="3.95" ry="4.6"/><rect x="533.85" y="540.95" width="7.9" height="31.0" rx="3.95" ry="4.6"/><rect x="549.45" y="540.95" width="7.9" height="31.0" rx="3.95" ry="4.6"/><rect x="565.05" y="540.95" width="7.9" height="31.0" rx="3.95" ry="4.6"/><rect x="580.65" y="540.95" width="7.9" height="31.0" rx="3.95" ry="4.6"/><rect x="596.25" y="540.95" width="7.9" height="31.0" rx="3.95" ry="4.6"/><rect x="611.85" y="540.95" width="7.9" height="31.0" rx="3.95" ry="4.6"/><rect x="627.45" y="540.95" width="7.9" height="31.0" rx="3.95" ry="4.6"/><rect x="643.05" y="540.95" width="7.9" height="31.0" rx="3.95" ry="4.6"/><rect x="658.65" y="540.95" width="7.9" height="31.0" rx="3.95" ry="4.6"/><rect x="674.25" y="540.95" width="7.9" height="31.0" rx="3.95" ry="4.6"/><rect x="689.85" y="540.95" width="7.9" height="31.0" rx="3.95" ry="4.6"/><rect x="705.45" y="540.95" width="7.9" height="31.0" rx="3.95" ry="4.6"/><rect x="721.05" y="540.95" width="7.9" height="31.0" rx="3.95" ry="4.6"/><rect x="736.65" y="540.95" width="7.9" height="31.0" rx="3.95" ry="4.6"/><rect x="752.25" y="540.95" width="7.9" height="31.0" rx="3.95" ry="4.6"/><rect x="767.85" y="540.95" width="7.9" height="31.0" rx="3.95" ry="4.6"/><rect x="783.45" y="540.95" width="7.9" height="31.0" rx="3.95" ry="4.6"/><rect x="799.05" y="540.95" width="7.9" height="31.0" rx="3.95" ry="4.6"/><rect x="814.65" y="540.95" width="7.9" height="31.0" rx="3.95" ry="4.6"/><rect x="830.25" y="540.95" width="7.9" height="31.0" rx="3.95" ry="4.6"/><rect x="845.85" y="540.95" width="7.9" height="31.0" rx="3.95" ry="4.6"/><rect x="861.45" y="540.95" width="7.9" height="31.0" rx="3.95" ry="4.6"/><rect x="877.05" y="540.95" width="7.9" height="31.0" rx="3.95" ry="4.6"/><rect x="892.65" y="540.95" width="7.9" height="31.0" rx="3.95" ry="4.6"/><rect x="908.25" y="540.95" width="7.9" height="31.0" rx="3.95" ry="4.6"/><rect x="923.85" y="540.95" width="7.9" height="31.0" rx="3.95" ry="4.6"/><rect x="939.45" y="540.95" width="7.9" height="31.0" rx="3.95" ry="4.6"/><rect x="463.65" y="587.75" width="7.9" height="31.0" rx="3.95" ry="4.6"/><rect x="479.25" y="587.75" width="7.9" height="31.0" rx="3.95" ry="4.6"/><rect x="494.85" y="587.75" width="7.9" height="31.0" rx="3.95" ry="4.6"/><rect x="510.45" y="587.75" width="7.9" height="31.0" rx="3.95" ry="4.6"/><rect x="526.05" y="587.75" width="7.9" height="31.0" rx="3.95" ry="4.6"/><rect x="541.65" y="587.75" width="7.9" height="31.0" rx="3.95" ry="4.6"/><rect x="557.25" y="587.75" width="7.9" height="31.0" rx="3.95" ry="4.6"/><rect x="572.85" y="587.75" width="7.9" height="31.0" rx="3.95" ry="4.6"/><rect x="588.45" y="587.75" width="7.9" height="31.0" rx="3.95" ry="4.6"/><rect x="604.05" y="587.75" width="7.9" height="31.0" rx="3.95" ry="4.6"/><rect x="619.65" y="587.75" width="7.9" height="31.0" rx="3.95" ry="4.6"/><rect x="635.25" y="587.75" width="7.9" height="31.0" rx="3.95" ry="4.6"/><rect x="650.85" y="587.75" width="7.9" height="31.0" rx="3.95" ry="4.6"/><rect x="666.45" y="587.75" width="7.9" height="31.0" rx="3.95" ry="4.6"/><rect x="682.05" y="587.75" width="7.9" height="31.0" rx="3.95" ry="4.6"/><rect x="697.65" y="587.75" width="7.9" height="31.0" rx="3.95" ry="4.6"/><rect x="713.25" y="587.75" width="7.9" height="31.0" rx="3.95" ry="4.6"/><rect x="728.85" y="587.75" width="7.9" height="31.0" rx="3.95" ry="4.6"/><rect x="744.45" y="587.75" width="7.9" height="31.0" rx="3.95" ry="4.6"/><rect x="760.05" y="587.75" width="7.9" height="31.0" rx="3.95" ry="4.6"/><rect x="775.65" y="587.75" width="7.9" height="31.0" rx="3.95" ry="4.6"/><rect x="791.25" y="587.75" width="7.9" height="31.0" rx="3.95" ry="4.6"/><rect x="806.85" y="587.75" width="7.9" height="31.0" rx="3.95" ry="4.6"/><rect x="822.45" y="587.75" width="7.9" height="31.0" rx="3.95" ry="4.6"/><rect x="838.05" y="587.75" width="7.9" height="31.0" rx="3.95" ry="4.6"/><rect x="853.65" y="587.75" width="7.9" height="31.0" rx="3.95" ry="4.6"/><rect x="869.25" y="587.75" width="7.9" height="31.0" rx="3.95" ry="4.6"/><rect x="884.85" y="587.75" width="7.9" height="31.0" rx="3.95" ry="4.6"/><rect x="900.45" y="587.75" width="7.9" height="31.0" rx="3.95" ry="4.6"/><rect x="916.05" y="587.75" width="7.9" height="31.0" rx="3.95" ry="4.6"/><rect x="931.65" y="587.75" width="7.9" height="31.0" rx="3.95" ry="4.6"/><rect x="487.05" y="634.55" width="7.9" height="31.0" rx="3.95" ry="4.6"/><rect x="502.65" y="634.55" width="7.9" height="31.0" rx="3.95" ry="4.6"/><rect x="518.25" y="634.55" width="7.9" height="31.0" rx="3.95" ry="4.6"/><rect x="533.85" y="634.55" width="7.9" height="31.0" rx="3.95" ry="4.6"/><rect x="549.45" y="634.55" width="7.9" height="31.0" rx="3.95" ry="4.6"/><rect x="565.05" y="634.55" width="7.9" height="31.0" rx="3.95" ry="4.6"/><rect x="580.65" y="634.55" width="7.9" height="31.0" rx="3.95" ry="4.6"/><rect x="596.25" y="634.55" width="7.9" height="31.0" rx="3.95" ry="4.6"/><rect x="611.85" y="634.55" width="7.9" height="31.0" rx="3.95" ry="4.6"/><rect x="627.45" y="634.55" width="7.9" height="31.0" rx="3.95" ry="4.6"/><rect x="643.05" y="634.55" width="7.9" height="31.0" rx="3.95" ry="4.6"/><rect x="658.65" y="634.55" width="7.9" height="31.0" rx="3.95" ry="4.6"/><rect x="674.25" y="634.55" width="7.9" height="31.0" rx="3.95" ry="4.6"/><rect x="689.85" y="634.55" width="7.9" height="31.0" rx="3.95" ry="4.6"/><rect x="705.45" y="634.55" width="7.9" height="31.0" rx="3.95" ry="4.6"/><rect x="721.05" y="634.55" width="7.9" height="31.0" rx="3.95" ry="4.6"/><rect x="736.65" y="634.55" width="7.9" height="31.0" rx="3.95" ry="4.6"/><rect x="752.25" y="634.55" width="7.9" height="31.0" rx="3.95" ry="4.6"/><rect x="767.85" y="634.55" width="7.9" height="31.0" rx="3.95" ry="4.6"/><rect x="783.45" y="634.55" width="7.9" height="31.0" rx="3.95" ry="4.6"/><rect x="799.05" y="634.55" width="7.9" height="31.0" rx="3.95" ry="4.6"/><rect x="814.65" y="634.55" width="7.9" height="31.0" rx="3.95" ry="4.6"/><rect x="830.25" y="634.55" width="7.9" height="31.0" rx="3.95" ry="4.6"/><rect x="845.85" y="634.55" width="7.9" height="31.0" rx="3.95" ry="4.6"/><rect x="861.45" y="634.55" width="7.9" height="31.0" rx="3.95" ry="4.6"/><rect x="877.05" y="634.55" width="7.9" height="31.0" rx="3.95" ry="4.6"/><rect x="892.65" y="634.55" width="7.9" height="31.0" rx="3.95" ry="4.6"/><rect x="908.25" y="634.55" width="7.9" height="31.0" rx="3.95" ry="4.6"/><rect x="541.65" y="681.35" width="7.9" height="31.0" rx="3.95" ry="4.6"/><rect x="557.25" y="681.35" width="7.9" height="31.0" rx="3.95" ry="4.6"/><rect x="572.85" y="681.35" width="7.9" height="31.0" rx="3.95" ry="4.6"/><rect x="588.45" y="681.35" width="7.9" height="31.0" rx="3.95" ry="4.6"/><rect x="604.05" y="681.35" width="7.9" height="31.0" rx="3.95" ry="4.6"/><rect x="619.65" y="681.35" width="7.9" height="31.0" rx="3.95" ry="4.6"/><rect x="635.25" y="681.35" width="7.9" height="31.0" rx="3.95" ry="4.6"/><rect x="650.85" y="681.35" width="7.9" height="31.0" rx="3.95" ry="4.6"/><rect x="666.45" y="681.35" width="7.9" height="31.0" rx="3.95" ry="4.6"/><rect x="682.05" y="681.35" width="7.9" height="31.0" rx="3.95" ry="4.6"/><rect x="697.65" y="681.35" width="7.9" height="31.0" rx="3.95" ry="4.6"/><rect x="713.25" y="681.35" width="7.9" height="31.0" rx="3.95" ry="4.6"/><rect x="728.85" y="681.35" width="7.9" height="31.0" rx="3.95" ry="4.6"/><rect x="744.45" y="681.35" width="7.9" height="31.0" rx="3.95" ry="4.6"/><rect x="760.05" y="681.35" width="7.9" height="31.0" rx="3.95" ry="4.6"/><rect x="775.65" y="681.35" width="7.9" height="31.0" rx="3.95" ry="4.6"/><rect x="791.25" y="681.35" width="7.9" height="31.0" rx="3.95" ry="4.6"/><rect x="806.85" y="681.35" width="7.9" height="31.0" rx="3.95" ry="4.6"/><rect x="822.45" y="681.35" width="7.9" height="31.0" rx="3.95" ry="4.6"/><rect x="838.05" y="681.35" width="7.9" height="31.0" rx="3.95" ry="4.6"/><rect x="853.65" y="681.35" width="7.9" height="31.0" rx="3.95" ry="4.6"/></g><path d="M420.5 564.6 V361.5 C420.5 248.0 516.0 152.5 629.5 152.5 H772 C885.5 152.5 981.9 248.0 981.9 361.5 V564.6" fill="none" stroke="#000" stroke-width="0.85" shape-rendering="crispEdges" stroke-dasharray="3.8 2.4"/><path d="M676.8 901.3 H725.8" fill="none" stroke="#000" stroke-width="0.85" shape-rendering="crispEdges" stroke-dasharray="3.8 2.4"/><path d="M981.9 564.6 C981.9 634 955.5 661.1 938.7 697.6 L931.6 700.8 C926 704 921 709 915.8 713.9 C899 726 882 735 864.7 744.7 C847 754.5 829 764 811 773.7 C799 780 788 791 778.9 802.9 C769 816 761 829 753.9 842.4 L729.7 890 L725.8 901.3" fill="none" stroke="#000" stroke-width="0.85" shape-rendering="crispEdges" stroke-dasharray="8.5 1.7"/><path d="M420.5 564.6 C420.5 634 446.7 661.1 462.6 697.6 L470.5 700.8 C476.6 704 481.6 709 486.8 713.9 C503.6 726 520.6 735 537.9 744.7 C555.8 754.5 573.8 764 591.8 773.7 C603.5 780 614.5 791 623.7 802.9 C633.5 816 641.5 829 648.7 842.4 L671.8 890 L676.8 901.3" fill="none" stroke="#000" stroke-width="0.85" shape-rendering="crispEdges" stroke-dasharray="8.5 1.7"/><path d="M426.5 709.5 C432 710.5 438 714 445.5 714.8 C450 714.5 453.5 712.5 457.5 711" fill="none" stroke="#ee0b0b" stroke-width="10.5" stroke-linecap="round" stroke-linejoin="round"/><circle cx="428" cy="710.5" r="6.3" fill="#ee0b0b"/><path d="M929.6 717.6 C938 717 944 714.6 948 713.3 C955 711 961 709.5 967.3 707.5 C975 705 981 700.5 986.5 697.4 C994 693.5 1000 691 1006.8 687.8" fill="none" stroke="#ee0b0b" stroke-width="11" stroke-linecap="round" stroke-linejoin="round"/><g fill="#ee0b0b"><circle cx="930" cy="717.4" r="6.8"/><circle cx="936" cy="716.6" r="6.3"/><circle cx="970" cy="706.4" r="6.3"/><circle cx="987" cy="696.6" r="7.2"/><circle cx="980" cy="701" r="6.4"/><circle cx="1006.4" cy="688" r="6.6"/><circle cx="1000" cy="690.6" r="6.2"/></g><g fill="#fff" fill-opacity="0.55" stroke="#2a86c8" stroke-width="1" shape-rendering="crispEdges"><rect x="771" y="151" width="3" height="3"/><rect x="419" y="360" width="3" height="3"/><rect x="980" y="360" width="3" height="3"/><rect x="419" y="563" width="3" height="3"/><rect x="980" y="563" width="3" height="3"/><rect x="461" y="696" width="3" height="3"/><rect x="469" y="699" width="3" height="3"/><rect x="485" y="712" width="3" height="3"/><rect x="536" y="743" width="3" height="3"/><rect x="590" y="772" width="3" height="3"/><rect x="622" y="801" width="3" height="3"/><rect x="647" y="841" width="3" height="3"/><rect x="670" y="889" width="3" height="3"/><rect x="675" y="900" width="3" height="3"/><rect x="937" y="696" width="3" height="3"/><rect x="930" y="699" width="3" height="3"/><rect x="914" y="712" width="3" height="3"/><rect x="863" y="743" width="3" height="3"/><rect x="810" y="772" width="3" height="3"/><rect x="777" y="801" width="3" height="3"/><rect x="752" y="841" width="3" height="3"/><rect x="728" y="889" width="3" height="3"/><rect x="724" y="900" width="3" height="3"/></g><path d="M626.5 149.5 H630 L633.5 152.5 L630 155.5 H626.5 Z" fill="#fff" stroke="#2a7cc4" stroke-width="1.1"/></svg>
<svg style="left:0;top:0" width="1353" height="988" viewBox="0 0 1353 988"><path d="M8.5 35.5 L12.5 31.5 H17.5 V43.5 H8.5 Z" fill="#f0f1f8" stroke="#4a4a66" stroke-width="1"/><path d="M9.5 38 H16.5 V42.5 H9.5Z" fill="#dcdfee"/><circle cx="18.3" cy="32.8" r="2.9" fill="#2ea32e"/><circle cx="17.6" cy="32" r="1.1" fill="#7fd67f"/><path d="M36.5 43.5 V31.5 H41.5 L43 33.5 H48.5 V43.5 Z" fill="#232a5c"/><path d="M37 43.3 L39.6 37.4 H50.2 L47.6 43.3 Z" fill="#e2e6f5" stroke="#232a5c" stroke-width="0.9"/><path d="M65.5 32.5 H75 L77.5 35 V43.5 H65.5 Z" fill="#cdcdcd"/><rect x="68" y="32.5" width="6" height="4" fill="#dedede"/><rect x="68" y="39" width="7" height="4.5" fill="#bdbdbd"/><rect x="96.5" y="30.5" width="6" height="7" fill="#fff" stroke="#9aa0b8" stroke-width="1"/><rect x="92.5" y="37.5" width="13" height="6" fill="#eeecd2" stroke="#111" stroke-width="1.4"/><rect x="93" y="37" width="12" height="2.2" fill="#111"/><g fill="none" stroke="#3f3f46" stroke-width="1.5"><circle cx="129.6" cy="33.2" r="2.2"/><circle cx="129.6" cy="40.4" r="2.2"/></g><path d="M131.5 34.5 L143 40.8 M131.5 39.2 L143 32.2" stroke="#3f3f46" stroke-width="1.7" fill="none" stroke-linecap="round"/><rect x="155.5" y="31.5" width="8" height="9" fill="#f4f6fb" stroke="#a9b0c8" stroke-width="1"/><rect x="160.5" y="34.5" width="9" height="10" fill="#fff" stroke="#2b2f5e" stroke-width="1.2"/><path d="M162.5 37.5H167.5M162.5 39.5H167.5M162.5 41.5H167.5" stroke="#2b2f5e" stroke-width="1"/><rect x="184" y="32" width="10" height="11.5" rx="1" fill="#5b4433"/><path d="M186.5 33 C186.5 30 191.5 30 191.5 33 Z" fill="#d8d8d8" stroke="#4d7a3a" stroke-width="0.9"/><rect x="189.5" y="35.5" width="9" height="9" fill="#fff" stroke="#3a3a4a" stroke-width="1.2"/><path d="M191.5 38.5H196.5M191.5 40.5H196.5M191.5 42.5H196.5" stroke="#3a3a4a" stroke-width="1"/><path d="M226.2 29.3 L220.3 35.3 L226.2 41.4 V38.0 C229.1 37.6 231.1 39.0 231.6 41.0 C231.9 42.6 231.1 43.6 229.9 44.3 C233.1 44.1 235.2 41.8 235.2 38.8 C235.2 35.0 231.7 32.8 226.2 32.8 Z" fill="#bcbcbc"/><path d="M271.5 29.3 L277.4 35.3 L271.5 41.4 V38 C268.6 37.6 266.6 39 266.1 41 C265.8 42.6 266.6 43.6 267.8 44.3 C264.6 44.1 262.5 41.8 262.5 38.8 C262.5 35 266 32.8 271.5 32.8 Z" fill="#46465a"/><rect x="313" y="29" width="16" height="16" fill="#4b2a86"/><path d="M318 29 H325 L322 34.9 H316.8 Z" fill="#fff"/><path d="M317.6 36 H323 V41.4 L321.4 39.8 L315.6 43.6 L313.6 42.6 L313.8 41.6 L319.6 38 Z" fill="#fff"/><path d="M358.5 44 V33.5 L361.5 30.5 H365 V44 Z" fill="#f4f5fa" stroke="#9ea4bc" stroke-width="1"/><rect x="349" y="37.5" width="8.5" height="7.5" fill="#2b2f5e"/><rect x="350.8" y="37.5" width="5" height="2.8" fill="#e8eaf4"/><rect x="351" y="42" width="4.5" height="3" fill="#9aa0c0"/><path d="M352 33 H358 V31 L361.5 33.8 L358 36.6 V34.6 H352 Z" fill="#e01818"/><path d="M377.5 40 V33.5 L380.5 30.5 H384.5 V40 Z" fill="#f4f5fa" stroke="#9ea4bc" stroke-width="1"/><rect x="384.5" y="37.5" width="8.5" height="7.5" fill="#2b2f5e"/><rect x="386.3" y="37.5" width="5" height="2.8" fill="#e8eaf4"/><rect x="386.5" y="42" width="4.5" height="3" fill="#9aa0c0"/><path d="M381 34.2 H387 V32.2 L390.5 35 L387 37.8 V35.8 H381 Z" fill="#e01818"/><path d="M405.5 44.5 V31 H411.5 L415.5 35 V44.5 Z" fill="#fafafa" stroke="#55555f" stroke-width="1"/><rect x="406" y="36" width="11" height="5.6" fill="#1c1c1c"/><path d="M416.5 34.8 L421 38.8 L416.5 42.8 Z" fill="#1c1c1c"/><text x="406.6" y="40.7" font-family="Liberation Sans,sans-serif" font-size="4.6" font-weight="bold" fill="#fff" textLength="9.6" lengthAdjust="spacingAndGlyphs">PDF</text><rect x="530.8" y="30.8" width="13.6" height="10.6" fill="#a9cde2" stroke="#3d4a66" stroke-width="1.2"/><path d="M533 36.1 H542.2 M537.6 32.6 V39.6" stroke="#1d2433" stroke-width="1.3"/><path d="M532.2 36.1 L534.4 34.3 V37.9Z M543 36.1 L540.8 34.3 V37.9Z M537.6 31.8 L535.9 33.8 H539.3Z M537.6 40.4 L535.9 38.4 H539.3Z" fill="#1d2433"/><path d="M533.5 44.3 H541.7" stroke="#6b7388" stroke-width="1"/><path d="M566.5 29.5 H582.5 V34 H571 V44.5 H566.5 Z" fill="#c6cae2" stroke="#9aa0c0" stroke-width="0.8"/><path d="M573 29.5V32M576 29.5V32M579 29.5V32" stroke="#6d7396" stroke-width="0.9"/><path d="M594.5 30H609 M594.5 33.2H609 M594.5 36.4H600 M594.5 39.6H598 M594.5 42.8H598 M595.7 29V44.5 M598.9 29V40 M602.1 29V36.4 M605.3 29V35.5 M608.5 29V35.5" stroke="#9a9a9a" stroke-width="1" fill="none"/><path d="M598 40.6 C600.5 36 607.5 36 610 40.6 C607.5 45.2 600.5 45.2 598 40.6Z" fill="#fff" stroke="#151515" stroke-width="1.4"/><circle cx="604" cy="40.3" r="2.7" fill="#151515"/><circle cx="603.2" cy="39.5" r="0.8" fill="#bbb"/><path d="M622 35.5 H638 M627.5 29.5 V45" stroke="#111" stroke-width="1.1" stroke-dasharray="1.2 1.2" fill="none"/><circle cx="627.5" cy="35.5" r="1.6" fill="#fff" stroke="#555" stroke-width="0.8"/><path d="M629.5 41.2 C631.5 37.6 636.5 37.6 638.5 41.2 C636.5 44.8 631.5 44.8 629.5 41.2Z" fill="#eee" stroke="#8a8a8a" stroke-width="1.1"/><circle cx="634" cy="41" r="2.1" fill="#7a7a7a"/><rect x="764.5" y="30.8" width="14" height="13.6" fill="#eef0f8" stroke="#50507c" stroke-width="1.1"/><rect x="764.5" y="30.4" width="14" height="2.4" fill="#50507c"/><path d="M766.5 43 V37 L769.5 38.5 L771.5 36.5 V43Z" fill="#56569a"/><rect x="771.5" y="35" width="5" height="8" fill="#bfc4e4" stroke="#56569a" stroke-width="0.8"/><path d="M799 32.3H806.5M799 37H806.5M799 41.7H806.5" stroke="#8a8a8a" stroke-width="1.1"/><path d="M794.2 31.6L795.8 33.4L798.4 29.6M794.2 36.3L795.8 38.1L798.4 34.3M794.2 41L795.8 42.8L798.4 39" stroke="#3f9a3a" stroke-width="1.3" fill="none"/><rect x="829.5" y="30" width="12.5" height="9" fill="#dfe2f3" stroke="#1a1a22" stroke-width="1.1"/><rect x="829" y="29.5" width="13.5" height="2.6" fill="#15151c"/><path d="M832.2 40 L835.8 44.5 L839.4 40 L837.6 41 L835.8 39.2 L834 41 Z" fill="#e02a18"/><path d="M834.6 43 L835.8 44.8 L837 43 Z" fill="#f5a623"/><path d="M118.5 77.9 H133.5" stroke="#c2c2c2" stroke-width="1"/><rect x="118.30" y="76.30" width="3.2" height="3.2" fill="#f5f5f5" stroke="#c2c2c2" stroke-width="1"/><rect x="124.30" y="76.30" width="3.2" height="3.2" fill="#f5f5f5" stroke="#c2c2c2" stroke-width="1"/><rect x="130.30" y="76.30" width="3.2" height="3.2" fill="#f5f5f5" stroke="#c2c2c2" stroke-width="1"/><circle cx="130.5" cy="70.4" r="3.6" fill="#c4c4c4"/><path d="M128.3 70.4H132.7M130.5 68.2V72.6" stroke="#fff" stroke-width="1.1"/><path d="M146.4 77.9 H161.4" stroke="#c2c2c2" stroke-width="1"/><rect x="146.20" y="76.30" width="3.2" height="3.2" fill="#f5f5f5" stroke="#c2c2c2" stroke-width="1"/><rect x="152.20" y="76.30" width="3.2" height="3.2" fill="#f5f5f5" stroke="#c2c2c2" stroke-width="1"/><rect x="158.20" y="76.30" width="3.2" height="3.2" fill="#f5f5f5" stroke="#c2c2c2" stroke-width="1"/><circle cx="158.4" cy="70.4" r="3.6" fill="#c4c4c4"/><path d="M156.20000000000002 70.4H160.6" stroke="#fff" stroke-width="1.1"/><path d="M183.5 64.5V80M195.5 64.5V80" stroke="#c2c2c2" stroke-width="1"/><rect x="181.80" y="66.30" width="3.4" height="3.4" fill="#f5f5f5" stroke="#c2c2c2" stroke-width="1"/><rect x="181.80" y="73.80" width="3.4" height="3.4" fill="#f5f5f5" stroke="#c2c2c2" stroke-width="1"/><rect x="193.80" y="69.80" width="3.4" height="3.4" fill="#f5f5f5" stroke="#c2c2c2" stroke-width="1"/><path d="M187 71.5H191.5" stroke="#c2c2c2" stroke-width="1.1"/><path d="M190.3 69.3L193 71.5L190.3 73.7Z" fill="#c2c2c2"/><path d="M211.5 64.5V80M222.5 64.5V80" stroke="#c2c2c2" stroke-width="1"/><rect x="209.80" y="69.80" width="3.4" height="3.4" fill="#f5f5f5" stroke="#c2c2c2" stroke-width="1"/><rect x="220.80" y="66.30" width="3.4" height="3.4" fill="#f5f5f5" stroke="#c2c2c2" stroke-width="1"/><rect x="220.80" y="73.80" width="3.4" height="3.4" fill="#f5f5f5" stroke="#c2c2c2" stroke-width="1"/><path d="M214.5 71.5H218.5" stroke="#c2c2c2" stroke-width="1.1"/><path d="M217.3 69.3L220 71.5L217.3 73.7Z" fill="#c2c2c2"/><path d="M248 78 L258 68" stroke="#c2c2c2" stroke-width="1.2"/><rect x="246.00" y="76.30" width="3.6" height="3.6" fill="#f5f5f5" stroke="#c2c2c2" stroke-width="1"/><rect x="256.10" y="66.00" width="3.6" height="3.6" fill="#f5f5f5" stroke="#c2c2c2" stroke-width="1"/><path d="M276 78 C276 71 280 67 287 66.5 M287 66.5 H278.5 M276 78 V70" stroke="#c2c2c2" stroke-width="1.1" fill="none"/><path d="M277.3 66.5 L279.8 65 V68Z" fill="#c2c2c2"/><rect x="274.20" y="76.30" width="3.6" height="3.6" fill="#f5f5f5" stroke="#c2c2c2" stroke-width="1"/><rect x="285.30" y="64.80" width="3.6" height="3.6" fill="#f5f5f5" stroke="#c2c2c2" stroke-width="1"/><path d="M311.5 80 C312 73 316 68.5 322.5 67.5 M322.5 68 C323.5 72 324 76 324.5 80 M322.5 67.3 H313.5 M322.5 68 L316.8 73.8" stroke="#c2c2c2" stroke-width="1.2" fill="none"/><path d="M315.6 75 L316.4 71.8 L318.8 74.2Z" fill="#c2c2c2"/><rect x="321.00" y="66.10" width="3.6" height="3.6" fill="#f5f5f5" stroke="#c2c2c2" stroke-width="1"/><path d="M338.8 80 C340 74 343 71.6 346.2 71.6 C349.5 71.6 352.5 74 353.8 80 M339.8 69.2 L352.6 74.6" stroke="#c2c2c2" stroke-width="1.2" fill="none"/><path d="M338.6 68.6 L341.6 68.4 L340.6 71Z M353.6 75.2 L350.6 75.2 L351.8 72.8Z" fill="#c2c2c2"/><rect x="344.30" y="70.10" width="3.6" height="3.6" fill="#f5f5f5" stroke="#c2c2c2" stroke-width="1"/><path d="M366.8 80 C367.6 74 370.6 71.6 374.1 71.6 C377.6 71.6 380.6 74 381.4 80 M367.4 71.6 H380.8" stroke="#c2c2c2" stroke-width="1.2" fill="none"/><path d="M366.4 71.6 L368.8 70 V73.2Z M381.8 71.6 L379.4 70 V73.2Z" fill="#c2c2c2"/><rect x="372.30" y="69.90" width="3.6" height="3.6" fill="#f5f5f5" stroke="#c2c2c2" stroke-width="1"/><path d="M408 75.8 C406.6 77.4 403.6 77.4 402.6 74.6 C401.6 71.6 402.8 68.2 406 67.6" stroke="#454a5e" stroke-width="1.5" fill="none"/><path d="M405.4 65.4 L408.8 67.6 L405.4 69.8Z" fill="#454a5e"/><path d="M404.6 72.4H408" stroke="#454a5e" stroke-width="1.2"/><path d="M407.4 70.4L410.2 72.4L407.4 74.4Z" fill="#454a5e"/><path d="M417.6 67.4 C415.2 66 412.8 67.6 412.6 70.6 C412.4 73.6 414 75.6 416.4 76.6" stroke="#454a5e" stroke-width="1.5" fill="none"/><path d="M418.6 74.2 L418.2 78.4 L414.6 77.2Z" fill="#454a5e"/><path d="M438.5 66.5 C441 67 442.5 68.5 443 70 M438.5 79 C441 78.5 442.5 77 443 75.5" stroke="#c2c2c2" stroke-width="1.1" fill="none"/><rect x="443.60" y="67.40" width="3.2" height="3.2" fill="#f5f5f5" stroke="#c2c2c2" stroke-width="1"/><rect x="450.80" y="67.40" width="3.2" height="3.2" fill="#f5f5f5" stroke="#c2c2c2" stroke-width="1"/><rect x="443.60" y="74.60" width="3.2" height="3.2" fill="#f5f5f5" stroke="#c2c2c2" stroke-width="1"/><rect x="450.80" y="74.60" width="3.2" height="3.2" fill="#f5f5f5" stroke="#c2c2c2" stroke-width="1"/><path d="M447.4 72.6H450" stroke="#c2c2c2" stroke-width="1"/><path d="M449.4 71L451.4 72.6L449.4 74.2Z" fill="#c2c2c2"/><path d="M452.4 70.8V74.4" stroke="#c2c2c2" stroke-width="1"/><path d="M476 69.8 V78 H484.5" stroke="#c2c2c2" stroke-width="1.1" fill="none"/><path d="M478 68 H484.5 M486.3 70 V76.2" stroke="#c2c2c2" stroke-width="1" stroke-dasharray="1.5 1.5" fill="none"/><rect x="474.30" y="66.30" width="3.4" height="3.4" fill="#f5f5f5" stroke="#c2c2c2" stroke-width="1"/><rect x="484.60" y="66.30" width="3.4" height="3.4" fill="#c9c9c9" stroke="#c2c2c2" stroke-width="1"/><rect x="484.60" y="76.30" width="3.4" height="3.4" fill="#f5f5f5" stroke="#c2c2c2" stroke-width="1"/><path d="M507.4 67 V78 M508 66.6 C516.5 66.6 516.5 78.6 508 78.6" stroke="#1c1c1c" stroke-width="1.5" fill="none"/><rect x="505.6" y="65.2" width="3.6" height="3.2" rx="1" fill="#fff" stroke="#1c1c1c" stroke-width="1.3"/><rect x="505.6" y="76.6" width="3.6" height="3.2" rx="1" fill="#fff" stroke="#1c1c1c" stroke-width="1.3"/><rect x="538.5" y="65.5" width="14.5" height="14" fill="none" stroke="#c2c2c2" stroke-width="1" stroke-dasharray="1.2 1.6"/><rect x="538.5" y="72.5" width="7.5" height="7" fill="#cfcfcf" stroke="#c0c0c0" stroke-width="1"/><path d="M541.6 71V67.6M548 76.6H551" stroke="#c2c2c2" stroke-width="1"/><path d="M540.2 68.4L541.6 66.6L543 68.4Z M550.4 75.2L552.2 76.6L550.4 78Z" fill="#c2c2c2"/><path d="M578.4 73.8 C578.4 77 576 79.2 573 79.2 C570 79.2 567.4 76.8 567.4 73.8 C567.4 70.8 570 68.4 573 68.4" stroke="#c6c6c6" stroke-width="1.5" fill="none"/><path d="M575.6 76.2 L578.4 72.4 L581 76.2Z" fill="#c6c6c6"/><path d="M576 70 L580.6 65.4" stroke="#c6c6c6" stroke-width="1.3"/><path d="M578.2 64.4 H581.8 V68Z" fill="#c6c6c6"/><path d="M610.5 64.5V80" stroke="#c2c2c2" stroke-width="1" stroke-dasharray="1.2 1.6"/><rect x="612.40" y="65.00" width="3.2" height="3.2" fill="#f5f5f5" stroke="#c2c2c2" stroke-width="1"/><rect x="602.40" y="73.40" width="3.2" height="3.2" fill="#f5f5f5" stroke="#c2c2c2" stroke-width="1"/><rect x="614.40" y="75.40" width="3.2" height="3.2" fill="#f5f5f5" stroke="#c2c2c2" stroke-width="1"/><path d="M607 74.2L608.8 75.2L607 76.2Z M613.2 76L611.4 77L613.2 78Z" fill="#c2c2c2"/><rect x="638.3" y="68.4" width="5.2" height="5.2" fill="#dcdcdc" stroke="#3a3a3a" stroke-width="1.2"/><path d="M646 64V79.5" stroke="#111" stroke-width="1.8" stroke-dasharray="1.6 1"/><rect x="648.6" y="68.4" width="5" height="5.2" fill="none" stroke="#111" stroke-width="1.2" stroke-dasharray="1.3 1.2"/><rect x="671.4" y="64.6" width="5.2" height="5" fill="#dcdcdc" stroke="#3a3a3a" stroke-width="1.2"/><path d="M666.8 72H682.2" stroke="#111" stroke-width="1.8" stroke-dasharray="1.6 1"/><rect x="671.4" y="74.6" width="5.2" height="5" fill="none" stroke="#111" stroke-width="1.2" stroke-dasharray="1.3 1.2"/><path d="M705 77.6 C703.4 76 703.6 74.2 705.2 72.6 L710.6 67.2 C712.2 65.6 714.2 65.6 715.6 67 C717 68.4 717 70.4 715.4 72 L710 77.4 C708.4 79 706.4 79 705 77.6Z" fill="none" stroke="#6a6a70" stroke-width="1.2"/><path d="M704 70.8L709.4 65.4 M706.4 77L714.6 68.8 M709.8 78.6L717 71.4 M705 74L712 67" stroke="#6a6a70" stroke-width="0.9"/><g fill="#111"><rect x="738" y="65" width="1.2" height="1.2"/><rect x="745.4" y="64.8" width="1.2" height="1.2"/><rect x="752.4" y="65" width="1.2" height="1.2"/><rect x="738" y="72" width="1.2" height="1.2"/><rect x="752.4" y="72" width="1.2" height="1.2"/><rect x="738" y="79" width="1.2" height="1.2"/><rect x="752.4" y="79" width="1.2" height="1.2"/><rect x="745.4" y="70.6" width="1" height="1"/></g><g fill="#fff" stroke="#111" stroke-width="1.1"><rect x="739.6" y="66.6" width="3" height="3"/><rect x="747.6" y="70.6" width="3" height="3"/><rect x="742.6" y="75.4" width="3" height="3"/></g><path d="M890 71.4 C892.5 67.4 895 68.4 896.6 70.4 C898.2 72.4 899.6 73 901.2 71.6 M890 76 C892.5 72 895 73 896.6 75 C898.2 77 899.6 77.6 901.2 76.2" stroke="#d2d2d2" stroke-width="1.4" fill="none"/><path d="M939.5 67V78" stroke="#8c8c8c" stroke-width="1.1"/><rect x="935.4" y="71.2" width="8.4" height="2.6" fill="#f5f5f5" stroke="#8c8c8c" stroke-width="1"/><g fill="#c8c8c8"><rect x="967.7" y="67.5" width="1.8" height="1.8"/><rect x="972.1" y="67.5" width="1.8" height="1.8"/><rect x="976.5" y="67.5" width="1.8" height="1.8"/><rect x="967.7" y="71.5" width="1.8" height="1.8"/><rect x="972.1" y="71.5" width="1.8" height="1.8"/><rect x="976.5" y="71.5" width="1.8" height="1.8"/><rect x="967.7" y="75.5" width="1.8" height="1.8"/><rect x="972.1" y="75.5" width="1.8" height="1.8"/><rect x="976.5" y="75.5" width="1.8" height="1.8"/><rect x="965.4" y="64.80000000000001" width="1.2" height="1.2"/><rect x="972.4" y="64.2" width="1.2" height="1.2"/><rect x="979.4" y="64.80000000000001" width="1.2" height="1.2"/><rect x="965.4" y="78.80000000000001" width="1.2" height="1.2"/><rect x="972.4" y="79.4" width="1.2" height="1.2"/><rect x="979.4" y="78.80000000000001" width="1.2" height="1.2"/><rect x="964.8" y="71.80000000000001" width="1.2" height="1.2"/><rect x="980.0" y="71.80000000000001" width="1.2" height="1.2"/></g><circle cx="1016" cy="72.8" r="7.8" fill="none" stroke="#b9b9b9" stroke-width="1.2"/><path d="M1010.4 72.8H1021.6M1016 67.2V78.4" stroke="#b9b9b9" stroke-width="1.3"/><path d="M5 153.5H27" stroke="#d6d6d6" stroke-width="1"/><path d="M5 217.5H27" stroke="#d6d6d6" stroke-width="1"/><path d="M5 365.5H27" stroke="#d6d6d6" stroke-width="1"/><path d="M5 401.5H27" stroke="#d6d6d6" stroke-width="1"/><path d="M5 465.5H27" stroke="#d6d6d6" stroke-width="1"/><path d="M5 529.5H27" stroke="#d6d6d6" stroke-width="1"/><path d="M5 621.5H27" stroke="#d6d6d6" stroke-width="1"/><path d="M5 657.5H27" stroke="#d6d6d6" stroke-width="1"/><path d="M12.6 99.6 L12.6 111.2 L15.4 108.8 L17.4 113.4 L19.4 112.4 L17.4 108 L20.8 107.6 Z" fill="#fff" stroke="#6c6c7c" stroke-width="1.1" stroke-linejoin="round"/><path d="M26 111.8 V117 H20.8 Z" fill="#111"/><rect x="5.5" y="124.5" width="22" height="22" fill="#fff" stroke="#b4b4b4" stroke-width="1"/><path d="M13.4 127.4 C11.4 132 11.6 137.6 13.8 142.4" stroke="#7c7c88" stroke-width="1.2" fill="none"/><rect x="10.4" y="131.6" width="3" height="3" fill="#fff" stroke="#33333f" stroke-width="1"/><path d="M14.6 135.4 L21.4 138.2 L17.2 142.6 Z" fill="#2c2c38"/><path d="M26.4 140.20000000000002 V145.4 H21.2 Z" fill="#111"/><path d="M12.4 164.4 V174.6 H23 M9.4 167.6 H19.8 V177.6" stroke="#3e3f52" stroke-width="1.7" fill="none"/><path d="M11.6 175.4 L22.4 164.6" stroke="#3e3f52" stroke-width="1.2"/><path d="M26 175.8 V181 H20.8 Z" fill="#111"/><circle cx="13.2" cy="198" r="5.3" fill="#fff" stroke="#77778a" stroke-width="1.2"/><path d="M8.6 198.6 H17.8 C17.4 201.2 15.6 202.6 13.2 202.6 C10.8 202.6 9 201.2 8.6 198.6Z" fill="#c9cbe2"/><path d="M17.2 202 L22.6 207" stroke="#2c2c38" stroke-width="2.2" stroke-linecap="round"/><path d="M26.2 203.4 V208.6 H21.0 Z" fill="#111"/><path d="M11.6 227.6V233.4M8.8 230.5H14.4" stroke="#3e3f52" stroke-width="1"/><path d="M11.6 238.4 C12.6 235.4 14.4 235.4 15.2 237.6 C16 239.8 17.4 240.4 18.4 238.6 C19.4 236.8 20.8 237.6 22 240.2" stroke="#3e3f52" stroke-width="1.7" fill="none" stroke-linecap="round"/><path d="M26 239.8 V245 H20.8 Z" fill="#111"/><path d="M9.6 262 C10 259.4 13.6 258.6 15 260.8 C16.2 262.8 15.4 266 18.4 266.4 C21 266.6 22.4 264.4 21.6 262.6" stroke="#3e3f52" stroke-width="1.7" fill="none" stroke-linecap="round"/><circle cx="20.4" cy="263" r="2.1" fill="#3e3f52"/><defs><linearGradient id="gl" x1="0" y1="0" x2="0" y2="1"><stop offset="0.4" stop-color="#fff"/><stop offset="1" stop-color="#c4c6de"/></linearGradient></defs><rect x="10.6" y="286.8" width="10.8" height="10.4" fill="url(#gl)" stroke="#4c4c62" stroke-width="1.2"/><path d="M26 296.0 V301.2 H20.8 Z" fill="#111"/><circle cx="15.8" cy="320.4" r="5.6" fill="url(#gl)" stroke="#4c4c62" stroke-width="1.2"/><path d="M26 323.2 V328.4 H20.8 Z" fill="#111"/><path d="M9.4 348 L12.6 342.6 H19.2 L22.4 348 L19.2 353.4 H12.6 Z" fill="url(#gl)" stroke="#4c4c62" stroke-width="1.2"/><path d="M26 352.0 V357.2 H20.8 Z" fill="#111"/><text x="8.4" y="390.6" font-family="Liberation Sans,sans-serif" font-weight="bold" font-size="19.5" fill="#e4e5f0" stroke="#77778c" stroke-width="1">A</text><path d="M26 388.2 V393.4 H20.8 Z" fill="#111"/><path d="M11 421.6 L20.8 415.2" stroke="#3e3f52" stroke-width="1.5"/><path d="M9 418.6 L12.8 424.4 M18.8 412.4 L22.6 418.2" stroke="#3e3f52" stroke-width="1.5"/><path d="M26 424.0 V429.2 H20.8 Z" fill="#111"/><path d="M13.6 441.6 L18.6 452.6" stroke="#3e3f52" stroke-width="1.2"/><rect x="11.4" y="439.4" width="4.4" height="4.4" fill="#e08a3c" stroke="#a8632a" stroke-width="0.8"/><rect x="16.4" y="450.4" width="4.4" height="4.4" fill="#e08a3c" stroke="#a8632a" stroke-width="0.8"/><path d="M26 452.2 V457.4 H20.8 Z" fill="#111"/><rect x="11.4" y="481" width="9.6" height="9" fill="#50506a"/><rect x="9.2" y="478.6" width="9.2" height="8.6" fill="url(#gl)" stroke="#3c3c50" stroke-width="1.1"/><path d="M26 488.0 V493.2 H20.8 Z" fill="#111"/><path d="M11.8 506.6 L16 503 L20.2 509.4 C18 511.2 15 511.4 13 509.6 Z" fill="#fff" stroke="#7c7c8a" stroke-width="1"/><path d="M13 509.6 C15 511.4 18 511.2 20.2 509.4 L18.4 506.8 H12.8Z" fill="#3a3a4a"/><path d="M14.4 510.6 L10.6 515.2 M8.6 513.4 L12.8 517" stroke="#8a8a96" stroke-width="1.1"/><defs><linearGradient id="gt" x1="0" y1="0" x2="0" y2="1"><stop offset="0" stop-color="#2c2c38"/><stop offset="1" stop-color="#c8c8d0"/></linearGradient></defs><path d="M20.4 511.6 L24 518.6 H16.8 Z" fill="url(#gt)"/><rect x="8.2" y="547" width="7.8" height="8" fill="#ec7c14"/><rect x="11" y="549.6" width="3" height="3.4" fill="#f8b060"/><path d="M14.6 548.8 L20.2 542.6" stroke="#2c2c38" stroke-width="2"/><path d="M18.4 541.6 L21.6 544.8 M19.6 543 L22.6 539.6" stroke="#2c2c38" stroke-width="3" stroke-linecap="round"/><path d="M26 552.0 V557.2 H20.8 Z" fill="#111"/><path d="M10.6 572.6 L14.6 568.6 L18.6 573.6 L14.2 577.4 Z" fill="#f4e8dc" stroke="#7a4a2c" stroke-width="1.3"/><path d="M13.2 568.4 L14.8 566.6" stroke="#3a3a48" stroke-width="1.6"/><path d="M18.4 574.6 L22.6 581.6 C20 583.6 17 583.4 15 581.6 Z" fill="#e8c450"/><path d="M26 580.1999999999999 V585.4 H20.8 Z" fill="#111"/><path d="M8.6 600.6 L12.6 596.6 L16.6 601.6 L12.2 605.4 Z" fill="#f0e0d0" stroke="#7a4a2c" stroke-width="1.3"/><path d="M11.2 596.4 L12.8 594.6" stroke="#3a3a48" stroke-width="1.6"/><rect x="14.6" y="605.6" width="8" height="5.6" fill="#fff" stroke="#50506a" stroke-width="1.1"/><rect x="16.6" y="603.4" width="7" height="5.4" fill="#e08a3c" stroke="#50506a" stroke-width="1"/><path d="M16 632.4 C13.4 636 12.4 639.4 13.6 642.8 H18.4 C19.6 639.4 18.6 636 16 632.4Z" fill="#fff" stroke="#3a3a4c" stroke-width="1.1"/><path d="M16 634.6 V640" stroke="#3a3a4c" stroke-width="1"/><path d="M12 645.4 H20" stroke="#1c1c26" stroke-width="1.8"/><path d="M26 644.1999999999999 V649.4 H20.8 Z" fill="#111"/><circle cx="16" cy="682" r="7.9" fill="none" stroke="#c2c2c2" stroke-width="1.2"/><path d="M10.4 682H21.6M16 676.4V687.6" stroke="#c2c2c2" stroke-width="1.4"/><path d="M40.4 122.4 L45 127" stroke="#111" stroke-width="1.1"/><path d="M46.4 128.4 L42.8 127.6 L45.6 124.8Z" fill="#111"/><path d="M37.5 121.5H47M39.5 119V128.5" stroke="#111" stroke-width="1" stroke-dasharray="1.6 1.4" fill="none"/><path d="M53.5 921.5 H59 L62.5 925 V932.5 H53.5 Z" fill="#fff" stroke="#111" stroke-width="1.1"/><path d="M58 924.6V930.4M55.2 927.5H60.8" stroke="#111" stroke-width="1.1"/><path d="M193.5 921.5 H199 L202.5 925 V932.5 H193.5 Z" fill="#fff" stroke="#111" stroke-width="1.1"/><path d="M198 924.6V930.4M195.2 927.5H200.8" stroke="#111" stroke-width="1.1"/><path d="M71.5 922.5V932.5" stroke="#8c8c8c" stroke-width="1.3"/><path d="M78.4 922.4 V932.6 L72.8 927.5Z" fill="#8c8c8c"/><path d="M96.4 922.4 V932.6 L90.6 927.5Z" fill="#8c8c8c"/><path d="M162.6 922.4 V932.6 L168.4 927.5Z" fill="#8c8c8c"/><path d="M177.6 922.4 V932.6 L183.2 927.5Z" fill="#8c8c8c"/><path d="M184.5 922.5V932.5" stroke="#8c8c8c" stroke-width="1.3"/><path d="M55.6 953.4 L60.6 947.4" stroke="#4a5a6e" stroke-width="1.8"/><path d="M59.6 946 L63 948.8 M61 947 L64 943.4" stroke="#20242e" stroke-width="3" stroke-linecap="round"/><path d="M1258.4 973 L1264 966.4 L1270 973.6 L1263.6 979.4 Z" fill="#fbf3ea" stroke="#5a3c28" stroke-width="1.2"/><path d="M1259.6 974.4 L1268.6 974.6 L1263.6 979 Z" fill="#d9822b"/><path d="M1262 966.6 L1264.6 963.6" stroke="#33333f" stroke-width="1.6"/><path d="M1270.4 974 C1272 976.6 1272 978 1270.6 978.6 C1269.4 978 1269.4 976.6 1270.4 974Z" fill="#3a64b4"/></svg>
</body></html>
